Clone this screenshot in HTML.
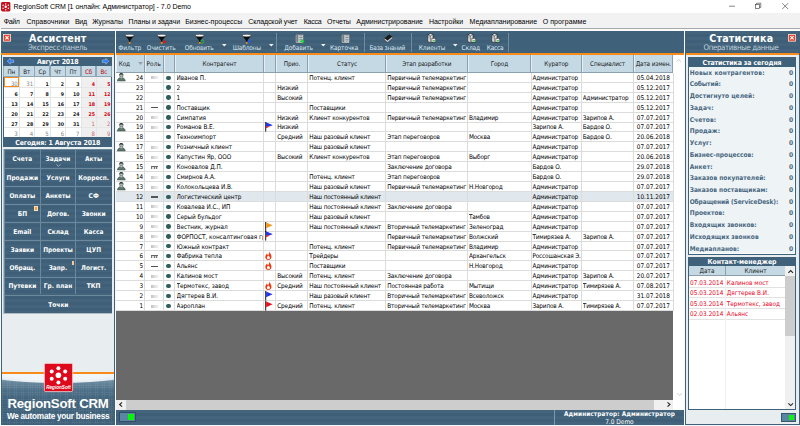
<!DOCTYPE html><html lang="ru"><head><meta charset="utf-8"><title>RegionSoft CRM</title>
<style>
html,body{margin:0;padding:0;}
body{width:800px;height:426px;overflow:hidden;position:relative;background:#f6f8f9;font-family:'DejaVu Sans Condensed','Liberation Sans',sans-serif;}
div{position:absolute;box-sizing:border-box;}
.t{height:auto;}
svg{position:absolute;overflow:visible;}
.stripe{background-image:repeating-linear-gradient(to bottom, rgba(255,255,255,0.02) 0, rgba(255,255,255,0.02) 0.6px, rgba(0,0,0,0.02) 0.6px, rgba(0,0,0,0.02) 1.2px);}
</style></head><body>
<div style="left:0.00px;top:0.00px;width:800.00px;height:13.00px;background:#ffffff;"></div>
<svg style="left:1px;top:1.6px" width="9.4" height="9.6" viewBox="0 0 10 10"><rect x="0" y="0" width="10" height="10" rx="1.5" fill="#c41220"/><circle cx="5" cy="5" r="1.3" fill="#fff"/><g fill="#fff"><circle cx="5" cy="1.9" r=".8"/><circle cx="5" cy="8.1" r=".8"/><circle cx="2.2" cy="3.4" r=".8"/><circle cx="7.8" cy="3.4" r=".8"/><circle cx="2.2" cy="6.6" r=".8"/><circle cx="7.8" cy="6.6" r=".8"/></g></svg>
<div class="t" style="top:2.45px;font-size:7px;line-height:9.10px;color:#000;white-space:nowrap;font-family:'Liberation Sans',sans-serif;letter-spacing:-0.025px;left:13.60px;"><span id="t1">RegionSoft CRM [1 онлайн: Администратор] - 7.0 Demo</span></div>
<svg style="left:700px;top:0" width="100" height="13" viewBox="0 0 100 13"><g stroke="#333" stroke-width="0.6" fill="none"><path d="M29 6.2h6"/><rect x="55.3" y="4.4" width="4.2" height="4.2"/><path d="M56.6 4.4v-1.2h4.2v4.2h-1.3"/><path d="M82.3 3.2l5.8 5.8M88.1 3.2l-5.8 5.8"/></g></svg>
<div style="left:0.00px;top:13.00px;width:800.00px;height:15.00px;background:#f2f2f2;"></div>
<div style="left:1.00px;top:28.05px;width:799.00px;height:0.95px;background:#a9a9a9;"></div>
<div style="left:0.00px;top:29.00px;width:800.00px;height:2.20px;background:#fbfbfb;"></div>
<div class="t" style="top:16.65px;font-size:7px;line-height:9.10px;color:#000;white-space:nowrap;font-family:'Liberation Sans',sans-serif;letter-spacing:-0.430px;left:3.80px;"><span id="t2">Файл</span></div>
<div class="t" style="top:16.65px;font-size:7px;line-height:9.10px;color:#000;white-space:nowrap;font-family:'Liberation Sans',sans-serif;letter-spacing:0.071px;left:26.40px;"><span id="t3">Справочники</span></div>
<div class="t" style="top:16.65px;font-size:7px;line-height:9.10px;color:#000;white-space:nowrap;font-family:'Liberation Sans',sans-serif;letter-spacing:-0.291px;left:74.90px;"><span id="t4">Вид</span></div>
<div class="t" style="top:16.65px;font-size:7px;line-height:9.10px;color:#000;white-space:nowrap;font-family:'Liberation Sans',sans-serif;letter-spacing:0.032px;left:92.20px;"><span id="t5">Журналы</span></div>
<div class="t" style="top:16.65px;font-size:7px;line-height:9.10px;color:#000;white-space:nowrap;font-family:'Liberation Sans',sans-serif;letter-spacing:-0.057px;left:128.60px;"><span id="t6">Планы и задачи</span></div>
<div class="t" style="top:16.65px;font-size:7px;line-height:9.10px;color:#000;white-space:nowrap;font-family:'Liberation Sans',sans-serif;letter-spacing:0.017px;left:185.20px;"><span id="t7">Бизнес-процессы</span></div>
<div class="t" style="top:16.65px;font-size:7px;line-height:9.10px;color:#000;white-space:nowrap;font-family:'Liberation Sans',sans-serif;letter-spacing:-0.098px;left:248.20px;"><span id="t8">Складской учет</span></div>
<div class="t" style="top:16.65px;font-size:7px;line-height:9.10px;color:#000;white-space:nowrap;font-family:'Liberation Sans',sans-serif;letter-spacing:-0.255px;left:303.80px;"><span id="t9">Касса</span></div>
<div class="t" style="top:16.65px;font-size:7px;line-height:9.10px;color:#000;white-space:nowrap;font-family:'Liberation Sans',sans-serif;letter-spacing:-0.051px;left:326.90px;"><span id="t10">Отчеты</span></div>
<div class="t" style="top:16.65px;font-size:7px;line-height:9.10px;color:#000;white-space:nowrap;font-family:'Liberation Sans',sans-serif;letter-spacing:-0.003px;left:356.30px;"><span id="t11">Администрирование</span></div>
<div class="t" style="top:16.65px;font-size:7px;line-height:9.10px;color:#000;white-space:nowrap;font-family:'Liberation Sans',sans-serif;letter-spacing:0.008px;left:428.90px;"><span id="t12">Настройки</span></div>
<div class="t" style="top:16.65px;font-size:7px;line-height:9.10px;color:#000;white-space:nowrap;font-family:'Liberation Sans',sans-serif;letter-spacing:-0.040px;left:469.60px;"><span id="t13">Медиапланирование</span></div>
<div class="t" style="top:16.65px;font-size:7px;line-height:9.10px;color:#000;white-space:nowrap;font-family:'Liberation Sans',sans-serif;letter-spacing:0.079px;left:542.70px;"><span id="t14">О программе</span></div>
<div style="left:1.10px;top:31.20px;width:113.70px;height:393.50px;background:#e8eeef;border:1.1px solid #3f6179;"></div>
<div style="left:1.20px;top:31.20px;width:113.30px;height:21.40px;background:#3f6179;"></div>
<div class="stripe" style="left:1.2px;top:31.2px;width:113.3px;height:21.4px"></div>
<div style="left:1.20px;top:52.60px;width:113.30px;height:2.50px;background:#f98b1b;"></div>
<svg style="left:3.3px;top:34.2px" width="8" height="7.6" viewBox="0 0 8 7.6"><rect x="0.4" y="0.4" width="7.2" height="6.8" fill="#e2412b" stroke="#f6e3dd" stroke-width="0.8"/><path d="M2.4 2.2l3.2 3.2M5.6 2.2L2.4 5.4" stroke="#fff" stroke-width="1.2"/></svg>
<div class="t" style="top:31.71px;font-size:10.6px;line-height:13.78px;color:#fff;white-space:nowrap;font-weight:bold;letter-spacing:0.266px;left:-92.30px;width:300px;text-align:center;text-indent:0.266px;"><span id="t15">Ассистент</span></div>
<div class="t" style="top:43.03px;font-size:7.8px;line-height:10.14px;color:#c3d2dc;white-space:nowrap;letter-spacing:-0.268px;left:-92.30px;width:300px;text-align:center;text-indent:-0.268px;"><span id="t16">Экспресс-панель</span></div>
<div style="left:3.30px;top:57.30px;width:109.00px;height:89.60px;background:#ffffff;border:0.8px solid #3f6179;"></div>
<div style="left:3.30px;top:57.30px;width:109.00px;height:8.80px;background:#3f6179;"></div>
<div class="t" style="top:58.05px;font-size:7px;line-height:9.10px;color:#fff;white-space:nowrap;font-weight:bold;letter-spacing:-0.160px;left:-92.20px;width:300px;text-align:center;text-indent:-0.160px;"><span id="t17">Август 2018</span></div>
<svg style="left:6.6px;top:58.3px;" width="7" height="6.4" viewBox="0 0 7 6.4"><path d="M0.2 3.2L3.3 0.3V2h3.4v2.4H3.3v1.7z" fill="#2f7bf0" stroke="#bcd6ff" stroke-width="0.5"/></svg>
<svg style="left:102.2px;top:58.3px;transform:scaleX(-1);" width="7" height="6.4" viewBox="0 0 7 6.4"><path d="M0.2 3.2L3.3 0.3V2h3.4v2.4H3.3v1.7z" fill="#2f7bf0" stroke="#bcd6ff" stroke-width="0.5"/></svg>
<div style="left:3.30px;top:66.00px;width:15.94px;height:10.90px;background:#c5d9e5;border:0.6px solid #8fa6b4;border-top:none;"></div>
<div class="t" style="top:67.57px;font-size:6.2px;line-height:8.06px;color:#1a1a1a;white-space:nowrap;left:-138.68px;width:300px;text-align:center;"><span id="t18">Пн</span></div>
<div style="left:18.74px;top:66.00px;width:15.94px;height:10.90px;background:#c5d9e5;border:0.6px solid #8fa6b4;border-top:none;"></div>
<div class="t" style="top:67.57px;font-size:6.2px;line-height:8.06px;color:#1a1a1a;white-space:nowrap;left:-123.24px;width:300px;text-align:center;"><span id="t19">Вт</span></div>
<div style="left:34.19px;top:66.00px;width:15.94px;height:10.90px;background:#c5d9e5;border:0.6px solid #8fa6b4;border-top:none;"></div>
<div class="t" style="top:67.57px;font-size:6.2px;line-height:8.06px;color:#1a1a1a;white-space:nowrap;left:-107.79px;width:300px;text-align:center;"><span id="t20">Ср</span></div>
<div style="left:49.63px;top:66.00px;width:15.94px;height:10.90px;background:#c5d9e5;border:0.6px solid #8fa6b4;border-top:none;"></div>
<div class="t" style="top:67.57px;font-size:6.2px;line-height:8.06px;color:#1a1a1a;white-space:nowrap;left:-92.35px;width:300px;text-align:center;"><span id="t21">Чт</span></div>
<div style="left:65.07px;top:66.00px;width:15.94px;height:10.90px;background:#c5d9e5;border:0.6px solid #8fa6b4;border-top:none;"></div>
<div class="t" style="top:67.57px;font-size:6.2px;line-height:8.06px;color:#1a1a1a;white-space:nowrap;left:-76.91px;width:300px;text-align:center;"><span id="t22">Пт</span></div>
<div style="left:80.51px;top:66.00px;width:15.94px;height:10.90px;background:#c5d9e5;border:0.6px solid #8fa6b4;border-top:none;"></div>
<div class="t" style="top:67.57px;font-size:6.2px;line-height:8.06px;color:#c00000;white-space:nowrap;left:-61.46px;width:300px;text-align:center;"><span id="t23">Сб</span></div>
<div style="left:95.96px;top:66.00px;width:15.94px;height:10.90px;background:#c5d9e5;border:0.6px solid #8fa6b4;border-top:none;"></div>
<div class="t" style="top:67.57px;font-size:6.2px;line-height:8.06px;color:#c00000;white-space:nowrap;left:-46.02px;width:300px;text-align:center;"><span id="t24">Вс</span></div>
<div style="left:80.51px;top:76.70px;width:30.89px;height:60.60px;background:#efefef;"></div>
<div class="t" style="top:79.75px;font-size:6.0px;line-height:7.80px;color:#858585;white-space:nowrap;left:-282.26px;width:300px;text-align:right;"><span id="t25">30</span></div>
<div class="t" style="top:79.75px;font-size:6.0px;line-height:7.80px;color:#858585;white-space:nowrap;left:-266.81px;width:300px;text-align:right;"><span id="t26">31</span></div>
<div class="t" style="top:80.57px;font-size:5.2px;line-height:6.76px;color:#161616;white-space:nowrap;font-weight:bold;left:-251.37px;width:300px;text-align:right;"><span id="t27">1</span></div>
<div class="t" style="top:80.57px;font-size:5.2px;line-height:6.76px;color:#161616;white-space:nowrap;font-weight:bold;left:-235.93px;width:300px;text-align:right;"><span id="t28">2</span></div>
<div class="t" style="top:80.57px;font-size:5.2px;line-height:6.76px;color:#161616;white-space:nowrap;font-weight:bold;left:-220.49px;width:300px;text-align:right;"><span id="t29">3</span></div>
<div class="t" style="top:80.57px;font-size:5.2px;line-height:6.76px;color:#d8000c;white-space:nowrap;font-weight:bold;left:-205.04px;width:300px;text-align:right;"><span id="t30">4</span></div>
<div class="t" style="top:80.57px;font-size:5.2px;line-height:6.76px;color:#d8000c;white-space:nowrap;font-weight:bold;left:-189.60px;width:300px;text-align:right;"><span id="t31">5</span></div>
<div style="left:4.10px;top:86.80px;width:107.40px;height:0.60px;background:#e6e6e6;"></div>
<div class="t" style="top:90.67px;font-size:5.2px;line-height:6.76px;color:#161616;white-space:nowrap;font-weight:bold;left:-282.26px;width:300px;text-align:right;"><span id="t32">6</span></div>
<div class="t" style="top:90.67px;font-size:5.2px;line-height:6.76px;color:#161616;white-space:nowrap;font-weight:bold;left:-266.81px;width:300px;text-align:right;"><span id="t33">7</span></div>
<div class="t" style="top:90.67px;font-size:5.2px;line-height:6.76px;color:#161616;white-space:nowrap;font-weight:bold;left:-251.37px;width:300px;text-align:right;"><span id="t34">8</span></div>
<div class="t" style="top:90.67px;font-size:5.2px;line-height:6.76px;color:#161616;white-space:nowrap;font-weight:bold;left:-235.93px;width:300px;text-align:right;"><span id="t35">9</span></div>
<div class="t" style="top:90.67px;font-size:5.2px;line-height:6.76px;color:#161616;white-space:nowrap;font-weight:bold;left:-220.49px;width:300px;text-align:right;"><span id="t36">10</span></div>
<div class="t" style="top:90.67px;font-size:5.2px;line-height:6.76px;color:#d8000c;white-space:nowrap;font-weight:bold;left:-205.04px;width:300px;text-align:right;"><span id="t37">11</span></div>
<div class="t" style="top:90.67px;font-size:5.2px;line-height:6.76px;color:#d8000c;white-space:nowrap;font-weight:bold;left:-189.60px;width:300px;text-align:right;"><span id="t38">12</span></div>
<div style="left:4.10px;top:96.90px;width:107.40px;height:0.60px;background:#e6e6e6;"></div>
<div class="t" style="top:100.77px;font-size:5.2px;line-height:6.76px;color:#161616;white-space:nowrap;font-weight:bold;left:-282.26px;width:300px;text-align:right;"><span id="t39">13</span></div>
<div class="t" style="top:100.77px;font-size:5.2px;line-height:6.76px;color:#161616;white-space:nowrap;font-weight:bold;left:-266.81px;width:300px;text-align:right;"><span id="t40">14</span></div>
<div class="t" style="top:100.77px;font-size:5.2px;line-height:6.76px;color:#161616;white-space:nowrap;font-weight:bold;left:-251.37px;width:300px;text-align:right;"><span id="t41">15</span></div>
<div class="t" style="top:100.77px;font-size:5.2px;line-height:6.76px;color:#161616;white-space:nowrap;font-weight:bold;left:-235.93px;width:300px;text-align:right;"><span id="t42">16</span></div>
<div class="t" style="top:100.77px;font-size:5.2px;line-height:6.76px;color:#161616;white-space:nowrap;font-weight:bold;left:-220.49px;width:300px;text-align:right;"><span id="t43">17</span></div>
<div class="t" style="top:100.77px;font-size:5.2px;line-height:6.76px;color:#d8000c;white-space:nowrap;font-weight:bold;left:-205.04px;width:300px;text-align:right;"><span id="t44">18</span></div>
<div class="t" style="top:100.77px;font-size:5.2px;line-height:6.76px;color:#d8000c;white-space:nowrap;font-weight:bold;left:-189.60px;width:300px;text-align:right;"><span id="t45">19</span></div>
<div style="left:4.10px;top:107.00px;width:107.40px;height:0.60px;background:#e6e6e6;"></div>
<div class="t" style="top:110.87px;font-size:5.2px;line-height:6.76px;color:#161616;white-space:nowrap;font-weight:bold;left:-282.26px;width:300px;text-align:right;"><span id="t46">20</span></div>
<div class="t" style="top:110.87px;font-size:5.2px;line-height:6.76px;color:#161616;white-space:nowrap;font-weight:bold;left:-266.81px;width:300px;text-align:right;"><span id="t47">21</span></div>
<div class="t" style="top:110.87px;font-size:5.2px;line-height:6.76px;color:#161616;white-space:nowrap;font-weight:bold;left:-251.37px;width:300px;text-align:right;"><span id="t48">22</span></div>
<div class="t" style="top:110.87px;font-size:5.2px;line-height:6.76px;color:#161616;white-space:nowrap;font-weight:bold;left:-235.93px;width:300px;text-align:right;"><span id="t49">23</span></div>
<div class="t" style="top:110.87px;font-size:5.2px;line-height:6.76px;color:#161616;white-space:nowrap;font-weight:bold;left:-220.49px;width:300px;text-align:right;"><span id="t50">24</span></div>
<div class="t" style="top:110.87px;font-size:5.2px;line-height:6.76px;color:#d8000c;white-space:nowrap;font-weight:bold;left:-205.04px;width:300px;text-align:right;"><span id="t51">25</span></div>
<div class="t" style="top:110.87px;font-size:5.2px;line-height:6.76px;color:#d8000c;white-space:nowrap;font-weight:bold;left:-189.60px;width:300px;text-align:right;"><span id="t52">26</span></div>
<div style="left:4.10px;top:117.10px;width:107.40px;height:0.60px;background:#e6e6e6;"></div>
<div class="t" style="top:120.97px;font-size:5.2px;line-height:6.76px;color:#161616;white-space:nowrap;font-weight:bold;left:-282.26px;width:300px;text-align:right;"><span id="t53">27</span></div>
<div class="t" style="top:120.97px;font-size:5.2px;line-height:6.76px;color:#161616;white-space:nowrap;font-weight:bold;left:-266.81px;width:300px;text-align:right;"><span id="t54">28</span></div>
<div class="t" style="top:120.97px;font-size:5.2px;line-height:6.76px;color:#161616;white-space:nowrap;font-weight:bold;left:-251.37px;width:300px;text-align:right;"><span id="t55">29</span></div>
<div class="t" style="top:120.97px;font-size:5.2px;line-height:6.76px;color:#161616;white-space:nowrap;font-weight:bold;left:-235.93px;width:300px;text-align:right;"><span id="t56">30</span></div>
<div class="t" style="top:120.97px;font-size:5.2px;line-height:6.76px;color:#161616;white-space:nowrap;font-weight:bold;left:-220.49px;width:300px;text-align:right;"><span id="t57">31</span></div>
<div class="t" style="top:120.15px;font-size:6.0px;line-height:7.80px;color:#d66a6e;white-space:nowrap;left:-205.04px;width:300px;text-align:right;"><span id="t58">1</span></div>
<div class="t" style="top:120.15px;font-size:6.0px;line-height:7.80px;color:#d66a6e;white-space:nowrap;left:-189.60px;width:300px;text-align:right;"><span id="t59">2</span></div>
<div style="left:4.10px;top:127.20px;width:107.40px;height:0.60px;background:#e6e6e6;"></div>
<div class="t" style="top:130.25px;font-size:6.0px;line-height:7.80px;color:#858585;white-space:nowrap;left:-282.26px;width:300px;text-align:right;"><span id="t60">3</span></div>
<div class="t" style="top:130.25px;font-size:6.0px;line-height:7.80px;color:#858585;white-space:nowrap;left:-266.81px;width:300px;text-align:right;"><span id="t61">4</span></div>
<div class="t" style="top:130.25px;font-size:6.0px;line-height:7.80px;color:#858585;white-space:nowrap;left:-251.37px;width:300px;text-align:right;"><span id="t62">5</span></div>
<div class="t" style="top:130.25px;font-size:6.0px;line-height:7.80px;color:#858585;white-space:nowrap;left:-235.93px;width:300px;text-align:right;"><span id="t63">6</span></div>
<div class="t" style="top:130.25px;font-size:6.0px;line-height:7.80px;color:#858585;white-space:nowrap;left:-220.49px;width:300px;text-align:right;"><span id="t64">7</span></div>
<div class="t" style="top:130.25px;font-size:6.0px;line-height:7.80px;color:#d66a6e;white-space:nowrap;left:-205.04px;width:300px;text-align:right;"><span id="t65">8</span></div>
<div class="t" style="top:130.25px;font-size:6.0px;line-height:7.80px;color:#d66a6e;white-space:nowrap;left:-189.60px;width:300px;text-align:right;"><span id="t66">9</span></div>
<div style="left:18.74px;top:76.70px;width:0.60px;height:60.60px;background:#e6e6e6;"></div>
<div style="left:34.19px;top:76.70px;width:0.60px;height:60.60px;background:#e6e6e6;"></div>
<div style="left:49.63px;top:76.70px;width:0.60px;height:60.60px;background:#e6e6e6;"></div>
<div style="left:65.07px;top:76.70px;width:0.60px;height:60.60px;background:#e6e6e6;"></div>
<div style="left:80.51px;top:76.70px;width:0.60px;height:60.60px;background:#e6e6e6;"></div>
<div style="left:95.96px;top:76.70px;width:0.60px;height:60.60px;background:#e6e6e6;"></div>
<div style="left:4.30px;top:77.00px;width:15.04px;height:9.80px;border:0.9px solid #f98b1b;"></div>
<div style="left:3.30px;top:137.40px;width:109.00px;height:9.40px;background:#3f6179;"></div>
<div class="t" style="top:138.81px;font-size:6.9px;line-height:8.97px;color:#fff;white-space:nowrap;font-weight:bold;letter-spacing:-0.109px;left:-92.20px;width:300px;text-align:center;text-indent:-0.109px;"><span id="t67">Сегодня: 1 Августа 2018</span></div>
<div style="left:3.40px;top:148.60px;width:109.10px;height:165.00px;background:#dfe6ea;border:0.5px solid #aebcc6;"></div>
<div class="stripe" style="left:4.3px;top:149.4px;width:107.4px;height:163.6px;background-color:#3f6179"></div>
<div class="t" style="top:155.44px;font-size:6.5px;line-height:8.45px;color:#fff;white-space:nowrap;font-weight:bold;left:-127.65px;width:300px;text-align:center;"><span id="t68">Счета</span></div>
<div class="t" style="top:155.44px;font-size:6.5px;line-height:8.45px;color:#fff;white-space:nowrap;font-weight:bold;left:-92.00px;width:300px;text-align:center;"><span id="t69">Задачи</span></div>
<div class="t" style="top:155.44px;font-size:6.5px;line-height:8.45px;color:#fff;white-space:nowrap;font-weight:bold;left:-56.35px;width:300px;text-align:center;"><span id="t70">Акты</span></div>
<div style="left:4.30px;top:167.83px;width:107.40px;height:0.80px;background:#6a899d;"></div>
<div class="t" style="top:173.57px;font-size:6.5px;line-height:8.45px;color:#fff;white-space:nowrap;font-weight:bold;left:-127.65px;width:300px;text-align:center;"><span id="t71">Продажи</span></div>
<div class="t" style="top:173.57px;font-size:6.5px;line-height:8.45px;color:#fff;white-space:nowrap;font-weight:bold;left:-92.00px;width:300px;text-align:center;"><span id="t72">Услуги</span></div>
<div class="t" style="top:173.57px;font-size:6.5px;line-height:8.45px;color:#fff;white-space:nowrap;font-weight:bold;left:-56.35px;width:300px;text-align:center;"><span id="t73">Корресп.</span></div>
<div style="left:4.30px;top:185.96px;width:107.40px;height:0.80px;background:#6a899d;"></div>
<div class="t" style="top:191.70px;font-size:6.5px;line-height:8.45px;color:#fff;white-space:nowrap;font-weight:bold;left:-127.65px;width:300px;text-align:center;"><span id="t74">Оплаты</span></div>
<div class="t" style="top:191.70px;font-size:6.5px;line-height:8.45px;color:#fff;white-space:nowrap;font-weight:bold;left:-92.00px;width:300px;text-align:center;"><span id="t75">Анкеты</span></div>
<div class="t" style="top:191.70px;font-size:6.5px;line-height:8.45px;color:#fff;white-space:nowrap;font-weight:bold;left:-56.35px;width:300px;text-align:center;"><span id="t76">СФ</span></div>
<div style="left:4.30px;top:204.09px;width:107.40px;height:0.80px;background:#6a899d;"></div>
<div class="t" style="top:209.83px;font-size:6.5px;line-height:8.45px;color:#fff;white-space:nowrap;font-weight:bold;left:-127.65px;width:300px;text-align:center;"><span id="t77">БП</span></div>
<div class="t" style="top:209.83px;font-size:6.5px;line-height:8.45px;color:#fff;white-space:nowrap;font-weight:bold;left:-92.00px;width:300px;text-align:center;"><span id="t78">Догов.</span></div>
<div class="t" style="top:209.83px;font-size:6.5px;line-height:8.45px;color:#fff;white-space:nowrap;font-weight:bold;left:-56.35px;width:300px;text-align:center;"><span id="t79">Звонки</span></div>
<div style="left:4.30px;top:222.22px;width:107.40px;height:0.80px;background:#6a899d;"></div>
<div class="t" style="top:227.96px;font-size:6.5px;line-height:8.45px;color:#fff;white-space:nowrap;font-weight:bold;left:-127.65px;width:300px;text-align:center;"><span id="t80">Email</span></div>
<div class="t" style="top:227.96px;font-size:6.5px;line-height:8.45px;color:#fff;white-space:nowrap;font-weight:bold;left:-92.00px;width:300px;text-align:center;"><span id="t81">Склад</span></div>
<div class="t" style="top:227.96px;font-size:6.5px;line-height:8.45px;color:#fff;white-space:nowrap;font-weight:bold;left:-56.35px;width:300px;text-align:center;"><span id="t82">Касса</span></div>
<div style="left:4.30px;top:240.35px;width:107.40px;height:0.80px;background:#6a899d;"></div>
<div class="t" style="top:246.09px;font-size:6.5px;line-height:8.45px;color:#fff;white-space:nowrap;font-weight:bold;left:-127.65px;width:300px;text-align:center;"><span id="t83">Заявки</span></div>
<div class="t" style="top:246.09px;font-size:6.5px;line-height:8.45px;color:#fff;white-space:nowrap;font-weight:bold;left:-92.00px;width:300px;text-align:center;"><span id="t84">Проекты</span></div>
<div class="t" style="top:246.09px;font-size:6.5px;line-height:8.45px;color:#fff;white-space:nowrap;font-weight:bold;left:-56.35px;width:300px;text-align:center;"><span id="t85">ЦУП</span></div>
<div style="left:4.30px;top:258.48px;width:107.40px;height:0.80px;background:#6a899d;"></div>
<div class="t" style="top:264.22px;font-size:6.5px;line-height:8.45px;color:#fff;white-space:nowrap;font-weight:bold;left:-127.65px;width:300px;text-align:center;"><span id="t86">Обращ.</span></div>
<div class="t" style="top:264.22px;font-size:6.5px;line-height:8.45px;color:#fff;white-space:nowrap;font-weight:bold;left:-92.00px;width:300px;text-align:center;"><span id="t87">Запр.</span></div>
<div class="t" style="top:264.22px;font-size:6.5px;line-height:8.45px;color:#fff;white-space:nowrap;font-weight:bold;left:-56.35px;width:300px;text-align:center;"><span id="t88">Логист.</span></div>
<div style="left:4.30px;top:276.61px;width:107.40px;height:0.80px;background:#6a899d;"></div>
<div class="t" style="top:282.35px;font-size:6.5px;line-height:8.45px;color:#fff;white-space:nowrap;font-weight:bold;left:-127.65px;width:300px;text-align:center;"><span id="t89">Путевки</span></div>
<div class="t" style="top:282.35px;font-size:6.5px;line-height:8.45px;color:#fff;white-space:nowrap;font-weight:bold;left:-92.00px;width:300px;text-align:center;"><span id="t90">Гр. план</span></div>
<div class="t" style="top:282.35px;font-size:6.5px;line-height:8.45px;color:#fff;white-space:nowrap;font-weight:bold;left:-56.35px;width:300px;text-align:center;"><span id="t91">ТКП</span></div>
<div style="left:4.30px;top:294.74px;width:107.40px;height:0.80px;background:#6a899d;"></div>
<div style="left:4.30px;top:149.40px;width:107.40px;height:0.70px;background:#6a899d;"></div>
<div style="left:4.30px;top:149.40px;width:0.70px;height:163.60px;background:#6a899d;"></div>
<div style="left:40.10px;top:149.40px;width:0.80px;height:144.64px;background:#6a899d;"></div>
<div style="left:75.10px;top:149.40px;width:0.80px;height:144.64px;background:#6a899d;"></div>
<div class="t" style="top:301.17px;font-size:6.5px;line-height:8.45px;color:#fff;white-space:nowrap;font-weight:bold;left:-91.60px;width:300px;text-align:center;"><span id="t92">Точки</span></div>
<svg style="left:55.6px;top:164.3px" width="4.8" height="2.8" viewBox="0 0 4.4 2.6"><path d="M0.3 0.3L2.2 2.2L4.1 0.3" fill="none" stroke="#c9d7e0" stroke-width="0.6"/></svg>
<div style="left:34.20px;top:206.20px;width:4.00px;height:4.40px;background:#f6a13a;border:0.5px solid #fbe0b8;"></div>
<div style="left:72.20px;top:260.60px;width:2.00px;height:4.60px;background:#f6c9a0;"></div>
<div style="left:1.7999999999999998px;top:373.2px;width:112.1px;height:51px;overflow:hidden;background:linear-gradient(to bottom,#93abbb 0,#6c8ba0 16%,#4d6f87 34%,#3f6179 56%)"><div style="left:-30px;top:-17px;width:172px;height:26.5px;border-radius:50%;background:radial-gradient(ellipse at 50% 30%,#f4f8fa 0,#f0f5f8 60%,#d4e0e8 88%,#b8cad6 100%)"></div><div style="left:0;top:0;width:100%;height:100%;background-image:repeating-linear-gradient(to right,rgba(255,255,255,0.05) 0,rgba(255,255,255,0.05) 0.6px,transparent 0.6px,transparent 1.76px),repeating-linear-gradient(to bottom,rgba(255,255,255,0.05) 0,rgba(255,255,255,0.05) 0.6px,transparent 0.6px,transparent 1.76px)"></div></div>
<div style="left:1.80px;top:372.40px;width:112.10px;height:2.00px;background:#f98b1b;"></div>
<svg style="left:43.9px;top:362.5px" width="29" height="29" viewBox="0 0 29 29"><rect x="0.4" y="0.4" width="28.2" height="28.2" rx="1.4" fill="#dc0a1c" stroke="#f5cfd2" stroke-width="0.8"/><g fill="#fff"><circle cx="14.4" cy="12.3" r="2.8"/><circle cx="14.4" cy="5.3" r="2"/><circle cx="14.4" cy="19.4" r="2"/><circle cx="7.7" cy="8.6" r="2"/><circle cx="21.2" cy="8.6" r="2"/><circle cx="7.7" cy="15.7" r="2"/><circle cx="21.2" cy="15.7" r="2"/></g><text x="14.5" y="26" font-size="4.7" font-weight="bold" font-style="italic" fill="#fff" text-anchor="middle" textLength="24.5" lengthAdjust="spacingAndGlyphs" font-family="Liberation Sans,sans-serif">RegionSoft</text></svg>
<div class="t" style="top:394.92px;font-size:13.2px;line-height:17.16px;color:#fff;white-space:nowrap;font-weight:bold;font-family:'Liberation Sans',sans-serif;letter-spacing:-0.202px;left:7.40px;"><span id="t93">RegionSoft CRM</span></div>
<div class="t" style="top:411.77px;font-size:8.2px;line-height:10.66px;color:#fff;white-space:nowrap;font-weight:bold;font-family:'Liberation Sans',sans-serif;letter-spacing:-0.248px;left:6.90px;"><span id="t94">We automate your business</span></div>
<div style="left:116.00px;top:31.20px;width:567.80px;height:21.50px;background:#3f6179;"></div>
<div class="stripe" style="left:116.0px;top:31.2px;width:392.6px;height:21.5px"></div>
<div style="left:116.00px;top:52.70px;width:567.80px;height:2.40px;background:#f98b1b;"></div>
<div class="t" style="top:43.88px;font-size:6.5px;line-height:8.45px;color:#dce9f3;white-space:nowrap;letter-spacing:-0.007px;left:118.20px;"><span id="t95">Фильтр</span></div>
<div class="t" style="top:43.88px;font-size:6.5px;line-height:8.45px;color:#dce9f3;white-space:nowrap;letter-spacing:-0.018px;left:146.80px;"><span id="t96">Очистить</span></div>
<div class="t" style="top:43.88px;font-size:6.5px;line-height:8.45px;color:#dce9f3;white-space:nowrap;letter-spacing:-0.115px;left:184.80px;"><span id="t97">Обновить</span></div>
<div class="t" style="top:43.88px;font-size:6.5px;line-height:8.45px;color:#dce9f3;white-space:nowrap;letter-spacing:-0.129px;left:232.70px;"><span id="t98">Шаблоны</span></div>
<div class="t" style="top:43.88px;font-size:6.5px;line-height:8.45px;color:#dce9f3;white-space:nowrap;letter-spacing:-0.080px;left:284.20px;"><span id="t99">Добавить</span></div>
<div class="t" style="top:43.88px;font-size:6.5px;line-height:8.45px;color:#dce9f3;white-space:nowrap;letter-spacing:-0.077px;left:329.90px;"><span id="t100">Карточка</span></div>
<div class="t" style="top:43.88px;font-size:6.5px;line-height:8.45px;color:#dce9f3;white-space:nowrap;letter-spacing:-0.245px;left:369.60px;"><span id="t101">База знаний</span></div>
<div class="t" style="top:43.88px;font-size:6.5px;line-height:8.45px;color:#dce9f3;white-space:nowrap;letter-spacing:-0.106px;left:418.80px;"><span id="t102">Клиенты</span></div>
<div class="t" style="top:43.88px;font-size:6.5px;line-height:8.45px;color:#dce9f3;white-space:nowrap;letter-spacing:-0.137px;left:461.60px;"><span id="t103">Склад</span></div>
<div class="t" style="top:43.88px;font-size:6.5px;line-height:8.45px;color:#dce9f3;white-space:nowrap;letter-spacing:-0.190px;left:486.70px;"><span id="t104">Касса</span></div>
<svg style="left:125.30px;top:33.9px" width="9.4" height="10" viewBox="0 0 9.4 10"><path d="M0.3 1.8L3.9 6.2v1.6h1.6V6.2L9.1 1.8z" fill="#0c0c0c"/><ellipse cx="4.7" cy="1.6" rx="4.35" ry="1.25" fill="#f6f6f6" stroke="#1a1a1a" stroke-width="0.45"/><rect x="3.85" y="7.9" width="1.7" height="1.9" fill="#f58a1a"/></svg>
<svg style="left:157.10px;top:33.9px" width="9.4" height="10" viewBox="0 0 9.4 10"><path d="M0.3 1.8L3.9 6.2v1.6h1.6V6.2L9.1 1.8z" fill="#0c0c0c"/><ellipse cx="4.7" cy="1.6" rx="4.35" ry="1.25" fill="#f6f6f6" stroke="#1a1a1a" stroke-width="0.45"/><rect x="3.85" y="7.9" width="1.7" height="1.9" fill="#f58a1a"/><path d="M6.2 6.6l2.6 2.6M8.8 6.6L6.2 9.2" stroke="#f01018" stroke-width="1.1"/></svg>
<svg style="left:195.30px;top:33.9px" width="9.4" height="10" viewBox="0 0 9.4 10"><path d="M0.3 1.8L3.9 6.2v1.6h1.6V6.2L9.1 1.8z" fill="#0c0c0c"/><ellipse cx="4.7" cy="1.6" rx="4.35" ry="1.25" fill="#f6f6f6" stroke="#1a1a1a" stroke-width="0.45"/><rect x="3.85" y="7.9" width="1.7" height="1.9" fill="#f58a1a"/><circle cx="7.4" cy="7.6" r="1.6" fill="none" stroke="#20c82c" stroke-width="1" stroke-dasharray="3.6 1.4"/></svg>
<svg style="left:241.80px;top:33.9px" width="9.4" height="10" viewBox="0 0 9.4 10"><path d="M0.3 1.8L3.9 6.2v1.6h1.6V6.2L9.1 1.8z" fill="#0c0c0c"/><ellipse cx="4.7" cy="1.6" rx="4.35" ry="1.25" fill="#f6f6f6" stroke="#1a1a1a" stroke-width="0.45"/><rect x="3.85" y="7.9" width="1.7" height="1.9" fill="#f58a1a"/><path d="M6.5 5.6h1.6v2h1L7.3 9.8L5.5 7.6h1z" fill="#1f5cf0"/></svg>
<svg style="left:294.90px;top:33.6px" width="9.4" height="9.8" viewBox="0 0 9.4 9.8"><rect x="0.4" y="0.4" width="8.2" height="8.6" fill="#e4e9ec" stroke="#39454d" stroke-width="0.55"/><rect x="1.2" y="1.2" width="2.2" height="7" fill="#53636d"/><path d="M1.2 3h2.2M1.2 5h2.2M1.2 7h2.2" stroke="#e4e9ec" stroke-width="0.45"/><path d="M4.2 1.9h3.6M4.2 3.6h3.6M4.2 5.3h3.6M4.2 7h3.6" stroke="#53636d" stroke-width="0.7"/><path d="M6.2 1.2v7" stroke="#8b979f" stroke-width="0.4"/><path d="M5.2 7.4h4M7.2 5.4v4" stroke="#18e028" stroke-width="1.3"/></svg>
<svg style="left:341.40px;top:33.6px" width="9.4" height="9.8" viewBox="0 0 9.4 9.8"><rect x="0.4" y="0.4" width="8.2" height="8.6" fill="#e4e9ec" stroke="#39454d" stroke-width="0.55"/><rect x="1.2" y="1.2" width="2.2" height="7" fill="#53636d"/><path d="M1.2 3h2.2M1.2 5h2.2M1.2 7h2.2" stroke="#e4e9ec" stroke-width="0.45"/><path d="M4.2 1.9h3.6M4.2 3.6h3.6M4.2 5.3h3.6M4.2 7h3.6" stroke="#53636d" stroke-width="0.7"/><path d="M6.2 1.2v7" stroke="#8b979f" stroke-width="0.4"/></svg>
<svg style="left:384.20px;top:34.4px" width="8.8" height="8.6" viewBox="0 0 8.8 8.6"><path d="M0.4 4.2L5.2 0.5L8.4 2.6L3.6 6.6z" fill="#1a1a1a"/><path d="M0.4 4.2v1.6L3.6 8.2L8.4 4.2V2.6L3.6 6.6z" fill="#f0f0f0" stroke="#1a1a1a" stroke-width="0.4"/></svg>
<svg style="left:427.00px;top:33.4px" width="9.2" height="10" viewBox="0 0 9.2 10"><path d="M0.8 1.9L3.6 0.4L6 1.4V8.6L3.4 9.7L0.8 8.6z" fill="#dfe3e6" stroke="#161616" stroke-width="0.55"/><path d="M0.8 1.9L3.4 2.9L6 1.4M3.4 2.9V9.7" stroke="#161616" stroke-width="0.45" fill="none"/><path d="M1.5 3.4l1.2 0.5M1.5 4.6l1.2 0.5" stroke="#555" stroke-width="0.4"/><rect x="4.9" y="5.2" width="3.9" height="4" fill="#eeeeee" stroke="#161616" stroke-width="0.45"/><rect x="5.7" y="7.3" width="2.3" height="1.1" fill="#18b428"/></svg>
<svg style="left:466.60px;top:33.4px" width="9.2" height="10" viewBox="0 0 9.2 10"><path d="M0.8 1.9L3.6 0.4L6 1.4V8.6L3.4 9.7L0.8 8.6z" fill="#dfe3e6" stroke="#161616" stroke-width="0.55"/><path d="M0.8 1.9L3.4 2.9L6 1.4M3.4 2.9V9.7" stroke="#161616" stroke-width="0.45" fill="none"/><path d="M1.5 3.4l1.2 0.5M1.5 4.6l1.2 0.5" stroke="#555" stroke-width="0.4"/><rect x="4.9" y="5.2" width="3.9" height="4" fill="#eeeeee" stroke="#161616" stroke-width="0.45"/><rect x="5.7" y="7.3" width="2.3" height="1.1" fill="#18b428"/></svg>
<svg style="left:491.10px;top:33.4px" width="9.2" height="10" viewBox="0 0 9.2 10"><path d="M0.8 1.9L3.6 0.4L6 1.4V8.6L3.4 9.7L0.8 8.6z" fill="#dfe3e6" stroke="#161616" stroke-width="0.55"/><path d="M0.8 1.9L3.4 2.9L6 1.4M3.4 2.9V9.7" stroke="#161616" stroke-width="0.45" fill="none"/><path d="M1.5 3.4l1.2 0.5M1.5 4.6l1.2 0.5" stroke="#555" stroke-width="0.4"/><rect x="4.9" y="5.2" width="3.9" height="4" fill="#eeeeee" stroke="#161616" stroke-width="0.45"/><rect x="5.7" y="7.3" width="2.3" height="1.1" fill="#18b428"/></svg>
<svg style="left:221.90px;top:44.2px" width="4.6" height="2.6" viewBox="0 0 4.6 2.6"><path d="M0 0h4.6L2.3 2.6z" fill="#eef4f8"/></svg>
<svg style="left:268.60px;top:44.2px" width="4.6" height="2.6" viewBox="0 0 4.6 2.6"><path d="M0 0h4.6L2.3 2.6z" fill="#eef4f8"/></svg>
<svg style="left:320.70px;top:44.2px" width="4.6" height="2.6" viewBox="0 0 4.6 2.6"><path d="M0 0h4.6L2.3 2.6z" fill="#eef4f8"/></svg>
<svg style="left:452.50px;top:44.2px" width="4.6" height="2.6" viewBox="0 0 4.6 2.6"><path d="M0 0h4.6L2.3 2.6z" fill="#eef4f8"/></svg>
<div style="left:275.60px;top:33.00px;width:0.70px;height:19.00px;background:#6f8da1;"></div>
<div style="left:364.30px;top:33.00px;width:0.70px;height:19.00px;background:#6f8da1;"></div>
<div style="left:410.50px;top:33.00px;width:0.70px;height:19.00px;background:#6f8da1;"></div>
<div style="left:508.30px;top:33.00px;width:0.70px;height:19.00px;background:#6f8da1;"></div>
<div style="left:116.00px;top:55.10px;width:557.00px;height:17.30px;background:#c5d9e5;"></div>
<div style="left:673.00px;top:55.10px;width:10.80px;height:345.00px;background:#ffffff;"></div>
<div style="left:143.70px;top:55.10px;width:0.80px;height:17.30px;background:#8c9fac;"></div>
<div style="left:116.00px;top:55.10px;width:0.60px;height:17.30px;background:#e4eef4;"></div>
<div class="t" style="top:59.64px;font-size:6.4px;line-height:8.32px;color:#1a1a1a;white-space:nowrap;left:118.80px;letter-spacing:-0.15px;"><span id="t105">Код</span></div>
<div style="left:163.10px;top:55.10px;width:0.80px;height:17.30px;background:#8c9fac;"></div>
<div style="left:144.50px;top:55.10px;width:0.60px;height:17.30px;background:#e4eef4;"></div>
<div class="t" style="top:59.64px;font-size:6.4px;line-height:8.32px;color:#1a1a1a;white-space:nowrap;letter-spacing:0.134px;left:146.50px;"><span id="t106">Роль</span></div>
<div style="left:174.20px;top:55.10px;width:0.80px;height:17.30px;background:#8c9fac;"></div>
<div style="left:163.90px;top:55.10px;width:0.60px;height:17.30px;background:#e4eef4;"></div>
<div style="left:263.20px;top:55.10px;width:0.80px;height:17.30px;background:#8c9fac;"></div>
<div style="left:175.00px;top:55.10px;width:0.60px;height:17.30px;background:#e4eef4;"></div>
<div class="t" style="top:59.64px;font-size:6.4px;line-height:8.32px;color:#1a1a1a;white-space:nowrap;left:69.50px;width:300px;text-align:center;letter-spacing:-0.15px;"><span id="t107">Контрагент</span></div>
<div style="left:275.10px;top:55.10px;width:0.80px;height:17.30px;background:#8c9fac;"></div>
<div style="left:264.00px;top:55.10px;width:0.60px;height:17.30px;background:#e4eef4;"></div>
<div style="left:307.20px;top:55.10px;width:0.80px;height:17.30px;background:#8c9fac;"></div>
<div style="left:275.90px;top:55.10px;width:0.60px;height:17.30px;background:#e4eef4;"></div>
<div class="t" style="top:59.64px;font-size:6.4px;line-height:8.32px;color:#1a1a1a;white-space:nowrap;left:141.95px;width:300px;text-align:center;letter-spacing:-0.15px;"><span id="t108">Прио.</span></div>
<div style="left:385.20px;top:55.10px;width:0.80px;height:17.30px;background:#8c9fac;"></div>
<div style="left:308.00px;top:55.10px;width:0.60px;height:17.30px;background:#e4eef4;"></div>
<div class="t" style="top:59.64px;font-size:6.4px;line-height:8.32px;color:#1a1a1a;white-space:nowrap;left:197.00px;width:300px;text-align:center;letter-spacing:-0.15px;"><span id="t109">Статус</span></div>
<div style="left:466.80px;top:55.10px;width:0.80px;height:17.30px;background:#8c9fac;"></div>
<div style="left:386.00px;top:55.10px;width:0.60px;height:17.30px;background:#e4eef4;"></div>
<div class="t" style="top:59.64px;font-size:6.4px;line-height:8.32px;color:#1a1a1a;white-space:nowrap;left:276.80px;width:300px;text-align:center;letter-spacing:-0.15px;"><span id="t110">Этап разработки</span></div>
<div style="left:530.30px;top:55.10px;width:0.80px;height:17.30px;background:#8c9fac;"></div>
<div style="left:467.60px;top:55.10px;width:0.60px;height:17.30px;background:#e4eef4;"></div>
<div class="t" style="top:59.64px;font-size:6.4px;line-height:8.32px;color:#1a1a1a;white-space:nowrap;left:349.35px;width:300px;text-align:center;letter-spacing:-0.15px;"><span id="t111">Город</span></div>
<div style="left:580.70px;top:55.10px;width:0.80px;height:17.30px;background:#8c9fac;"></div>
<div style="left:531.10px;top:55.10px;width:0.60px;height:17.30px;background:#e4eef4;"></div>
<div class="t" style="top:59.64px;font-size:6.4px;line-height:8.32px;color:#1a1a1a;white-space:nowrap;left:406.30px;width:300px;text-align:center;letter-spacing:-0.15px;"><span id="t112">Куратор</span></div>
<div style="left:632.70px;top:55.10px;width:0.80px;height:17.30px;background:#8c9fac;"></div>
<div style="left:581.50px;top:55.10px;width:0.60px;height:17.30px;background:#e4eef4;"></div>
<div class="t" style="top:59.64px;font-size:6.4px;line-height:8.32px;color:#1a1a1a;white-space:nowrap;left:457.50px;width:300px;text-align:center;letter-spacing:-0.15px;"><span id="t113">Специалист</span></div>
<div style="left:672.40px;top:55.10px;width:0.80px;height:17.30px;background:#8c9fac;"></div>
<div style="left:633.50px;top:55.10px;width:0.60px;height:17.30px;background:#e4eef4;"></div>
<div class="t" style="top:59.64px;font-size:6.4px;line-height:8.32px;color:#1a1a1a;white-space:nowrap;left:503.35px;width:300px;text-align:center;letter-spacing:-0.15px;"><span id="t114">Дата измен.</span></div>
<div style="left:116.00px;top:71.80px;width:557.00px;height:0.70px;background:#8c9fac;"></div>
<svg style="left:138.0px;top:62.2px" width="5" height="3" viewBox="0 0 5 3"><path d="M0 0h5L2.5 3z" fill="#93a2ad"/></svg>
<div style="left:116.00px;top:72.50px;width:557.00px;height:238.08px;background:#ffffff;"></div>
<div style="left:116.00px;top:81.82px;width:557.00px;height:0.60px;background:#dcdcdc;"></div>
<svg style="left:116.50px;top:72.10px" width="8.6" height="9.2" viewBox="0 0 8.6 9.2"><path d="M0.3 9C0.5 7.2 1.6 6.4 3 5.6L4.3 6.8L5.6 5.6C7 6.4 8.1 7.2 8.3 9z" fill="#5f7b70" stroke="#2c3d36" stroke-width="0.45"/><circle cx="4.3" cy="3.4" r="1.8" fill="#a9bab1" stroke="#2c3d36" stroke-width="0.5"/><path d="M2.2 2.9C2.4 0.4 6.2 0.4 6.4 2.9C5 2.4 3.6 2.4 2.2 2.9z" fill="#2c3d36"/></svg>
<div class="t" style="left:116.00px;top:73.86px;width:27.10px;height:8.4px;overflow:hidden;font-size:6.4px;line-height:8.4px;color:#000;white-space:nowrap;text-align:right;letter-spacing:-0.15px">24</div>
<div style="left:151.00px;top:76.46px;width:7px;height:3px;background:linear-gradient(to right,#c4c4c4,#d4d4d4 40%,#e6e6e6 60%,#ececec)"></div>
<div style="left:166.45px;top:75.56px;width:4.3px;height:4.3px;border-radius:50%;background:#2f5d5b"></div>
<div class="t" style="left:176.50px;top:73.86px;width:86.80px;height:8.4px;overflow:hidden;font-size:6.4px;line-height:8.4px;color:#000;white-space:nowrap;letter-spacing:-0.05px">Иванов П.</div>
<div class="t" style="left:309.30px;top:73.86px;width:76.00px;height:8.4px;overflow:hidden;font-size:6.4px;line-height:8.4px;color:#000;white-space:nowrap;letter-spacing:-0.15px">Потенц. клиент</div>
<div class="t" style="left:387.30px;top:73.86px;width:79.60px;height:8.4px;overflow:hidden;font-size:6.4px;line-height:8.4px;color:#000;white-space:nowrap;letter-spacing:-0.15px">Первичный телемаркетинг</div>
<div class="t" style="left:532.40px;top:73.86px;width:48.40px;height:8.4px;overflow:hidden;font-size:6.4px;line-height:8.4px;color:#000;white-space:nowrap;letter-spacing:-0.15px">Администратор</div>
<div class="t" style="left:633.50px;top:73.86px;width:39.70px;height:8.4px;overflow:hidden;font-size:6.4px;line-height:8.4px;color:#000;white-space:nowrap;text-align:center;letter-spacing:0.04px">05.04.2018</div>
<div style="left:116.00px;top:91.74px;width:557.00px;height:0.60px;background:#dcdcdc;"></div>
<div class="t" style="left:116.00px;top:83.78px;width:27.10px;height:8.4px;overflow:hidden;font-size:6.4px;line-height:8.4px;color:#000;white-space:nowrap;text-align:right;letter-spacing:-0.15px">23</div>
<div style="left:166.45px;top:85.48px;width:4.3px;height:4.3px;border-radius:50%;background:#2f5d5b"></div>
<div class="t" style="left:176.50px;top:83.78px;width:86.80px;height:8.4px;overflow:hidden;font-size:6.4px;line-height:8.4px;color:#000;white-space:nowrap;letter-spacing:-0.05px">2</div>
<div class="t" style="left:277.20px;top:83.78px;width:30.10px;height:8.4px;overflow:hidden;font-size:6.4px;line-height:8.4px;color:#000;white-space:nowrap;letter-spacing:-0.15px">Низкий</div>
<div class="t" style="left:387.30px;top:83.78px;width:79.60px;height:8.4px;overflow:hidden;font-size:6.4px;line-height:8.4px;color:#000;white-space:nowrap;letter-spacing:-0.15px">Первичный телемаркетинг</div>
<div class="t" style="left:532.40px;top:83.78px;width:48.40px;height:8.4px;overflow:hidden;font-size:6.4px;line-height:8.4px;color:#000;white-space:nowrap;letter-spacing:-0.15px">Администратор</div>
<div class="t" style="left:633.50px;top:83.78px;width:39.70px;height:8.4px;overflow:hidden;font-size:6.4px;line-height:8.4px;color:#000;white-space:nowrap;text-align:center;letter-spacing:0.04px">05.12.2017</div>
<div style="left:116.00px;top:101.66px;width:557.00px;height:0.60px;background:#dcdcdc;"></div>
<div class="t" style="left:116.00px;top:93.70px;width:27.10px;height:8.4px;overflow:hidden;font-size:6.4px;line-height:8.4px;color:#000;white-space:nowrap;text-align:right;letter-spacing:-0.15px">22</div>
<div style="left:166.45px;top:95.40px;width:4.3px;height:4.3px;border-radius:50%;background:#2f5d5b"></div>
<div class="t" style="left:176.50px;top:93.70px;width:86.80px;height:8.4px;overflow:hidden;font-size:6.4px;line-height:8.4px;color:#000;white-space:nowrap;letter-spacing:-0.05px">1</div>
<div class="t" style="left:277.20px;top:93.70px;width:30.10px;height:8.4px;overflow:hidden;font-size:6.4px;line-height:8.4px;color:#000;white-space:nowrap;letter-spacing:-0.15px">Высокий</div>
<div class="t" style="left:387.30px;top:93.70px;width:79.60px;height:8.4px;overflow:hidden;font-size:6.4px;line-height:8.4px;color:#000;white-space:nowrap;letter-spacing:-0.15px">Первичный телемаркетинг</div>
<div class="t" style="left:532.40px;top:93.70px;width:48.40px;height:8.4px;overflow:hidden;font-size:6.4px;line-height:8.4px;color:#000;white-space:nowrap;letter-spacing:-0.15px">Администратор</div>
<div class="t" style="left:582.80px;top:93.70px;width:50.00px;height:8.4px;overflow:hidden;font-size:6.4px;line-height:8.4px;color:#000;white-space:nowrap;letter-spacing:-0.15px">Администратор</div>
<div class="t" style="left:633.50px;top:93.70px;width:39.70px;height:8.4px;overflow:hidden;font-size:6.4px;line-height:8.4px;color:#000;white-space:nowrap;text-align:center;letter-spacing:0.04px">05.12.2017</div>
<div style="left:116.00px;top:111.58px;width:557.00px;height:0.60px;background:#dcdcdc;"></div>
<div class="t" style="left:116.00px;top:103.62px;width:27.10px;height:8.4px;overflow:hidden;font-size:6.4px;line-height:8.4px;color:#000;white-space:nowrap;text-align:right;letter-spacing:-0.15px">21</div>
<div style="left:151.30px;top:107.12px;width:6.4px;height:1.3px;background:#555"></div>
<div style="left:166.45px;top:105.32px;width:4.3px;height:4.3px;border-radius:50%;background:#2f5d5b"></div>
<div class="t" style="left:176.50px;top:103.62px;width:86.80px;height:8.4px;overflow:hidden;font-size:6.4px;line-height:8.4px;color:#000;white-space:nowrap;letter-spacing:-0.05px">Поставщик</div>
<div class="t" style="left:309.30px;top:103.62px;width:76.00px;height:8.4px;overflow:hidden;font-size:6.4px;line-height:8.4px;color:#000;white-space:nowrap;letter-spacing:-0.15px">Поставщики</div>
<div class="t" style="left:532.40px;top:103.62px;width:48.40px;height:8.4px;overflow:hidden;font-size:6.4px;line-height:8.4px;color:#000;white-space:nowrap;letter-spacing:-0.15px">Администратор</div>
<div class="t" style="left:633.50px;top:103.62px;width:39.70px;height:8.4px;overflow:hidden;font-size:6.4px;line-height:8.4px;color:#000;white-space:nowrap;text-align:center;letter-spacing:0.04px">05.12.2017</div>
<div style="left:116.00px;top:121.50px;width:557.00px;height:0.60px;background:#dcdcdc;"></div>
<div class="t" style="left:116.00px;top:113.54px;width:27.10px;height:8.4px;overflow:hidden;font-size:6.4px;line-height:8.4px;color:#000;white-space:nowrap;text-align:right;letter-spacing:-0.15px">20</div>
<div style="left:151.00px;top:116.14px;width:7px;height:3px;background:linear-gradient(to right,#c4c4c4,#d4d4d4 40%,#e6e6e6 60%,#ececec)"></div>
<div style="left:166.45px;top:115.24px;width:4.3px;height:4.3px;border-radius:50%;background:#2f5d5b"></div>
<div class="t" style="left:176.50px;top:113.54px;width:86.80px;height:8.4px;overflow:hidden;font-size:6.4px;line-height:8.4px;color:#000;white-space:nowrap;letter-spacing:-0.05px">Симпатия</div>
<div class="t" style="left:277.20px;top:113.54px;width:30.10px;height:8.4px;overflow:hidden;font-size:6.4px;line-height:8.4px;color:#000;white-space:nowrap;letter-spacing:-0.15px">Низкий</div>
<div class="t" style="left:309.30px;top:113.54px;width:76.00px;height:8.4px;overflow:hidden;font-size:6.4px;line-height:8.4px;color:#000;white-space:nowrap;letter-spacing:-0.15px">Клиент конкурентов</div>
<div class="t" style="left:387.30px;top:113.54px;width:79.60px;height:8.4px;overflow:hidden;font-size:6.4px;line-height:8.4px;color:#000;white-space:nowrap;letter-spacing:-0.15px">Первичный телемаркетинг</div>
<div class="t" style="left:468.90px;top:113.54px;width:61.50px;height:8.4px;overflow:hidden;font-size:6.4px;line-height:8.4px;color:#000;white-space:nowrap;letter-spacing:-0.15px">Владимир</div>
<div class="t" style="left:532.40px;top:113.54px;width:48.40px;height:8.4px;overflow:hidden;font-size:6.4px;line-height:8.4px;color:#000;white-space:nowrap;letter-spacing:-0.15px">Администратор</div>
<div class="t" style="left:582.80px;top:113.54px;width:50.00px;height:8.4px;overflow:hidden;font-size:6.4px;line-height:8.4px;color:#000;white-space:nowrap;letter-spacing:-0.15px">Зарипов А.</div>
<div class="t" style="left:633.50px;top:113.54px;width:39.70px;height:8.4px;overflow:hidden;font-size:6.4px;line-height:8.4px;color:#000;white-space:nowrap;text-align:center;letter-spacing:0.04px">07.07.2017</div>
<div style="left:116.00px;top:131.42px;width:557.00px;height:0.60px;background:#dcdcdc;"></div>
<svg style="left:116.50px;top:121.70px" width="8.6" height="9.2" viewBox="0 0 8.6 9.2"><path d="M0.3 9C0.5 7.2 1.6 6.4 3 5.6L4.3 6.8L5.6 5.6C7 6.4 8.1 7.2 8.3 9z" fill="#5f7b70" stroke="#2c3d36" stroke-width="0.45"/><circle cx="4.3" cy="3.4" r="1.8" fill="#a9bab1" stroke="#2c3d36" stroke-width="0.5"/><path d="M2.2 2.9C2.4 0.4 6.2 0.4 6.4 2.9C5 2.4 3.6 2.4 2.2 2.9z" fill="#2c3d36"/></svg>
<div class="t" style="left:116.00px;top:123.46px;width:27.10px;height:8.4px;overflow:hidden;font-size:6.4px;line-height:8.4px;color:#000;white-space:nowrap;text-align:right;letter-spacing:-0.15px">19</div>
<div style="left:151.00px;top:126.06px;width:7px;height:3px;background:linear-gradient(to right,#c4c4c4,#d4d4d4 40%,#e6e6e6 60%,#ececec)"></div>
<div style="left:166.45px;top:125.16px;width:4.3px;height:4.3px;border-radius:50%;background:#2f5d5b"></div>
<div class="t" style="left:176.50px;top:123.46px;width:86.80px;height:8.4px;overflow:hidden;font-size:6.4px;line-height:8.4px;color:#000;white-space:nowrap;letter-spacing:-0.05px">Романов В.Е.</div>
<svg style="left:265.40px;top:122.30px" width="8" height="9.6" viewBox="0 0 8 9.6"><path d="M0.7 0V9.6" stroke="#000" stroke-width="0.9"/><path d="M1.1 0.5L7.6 3.3L1.1 4.4z" fill="#2236e2"/><path d="M1.1 4.2L5.6 4.2L1.1 6.2z" fill="#e81020"/><path d="M1.1 0.5L7.6 3.3L1.1 4.6z" fill="#2236e2"/></svg>
<div class="t" style="left:277.20px;top:123.46px;width:30.10px;height:8.4px;overflow:hidden;font-size:6.4px;line-height:8.4px;color:#000;white-space:nowrap;letter-spacing:-0.15px">Низкий</div>
<div class="t" style="left:532.40px;top:123.46px;width:48.40px;height:8.4px;overflow:hidden;font-size:6.4px;line-height:8.4px;color:#000;white-space:nowrap;letter-spacing:-0.15px">Зарипов А.</div>
<div class="t" style="left:582.80px;top:123.46px;width:50.00px;height:8.4px;overflow:hidden;font-size:6.4px;line-height:8.4px;color:#000;white-space:nowrap;letter-spacing:-0.15px">Бардов О.</div>
<div class="t" style="left:633.50px;top:123.46px;width:39.70px;height:8.4px;overflow:hidden;font-size:6.4px;line-height:8.4px;color:#000;white-space:nowrap;text-align:center;letter-spacing:0.04px">07.07.2017</div>
<div style="left:116.00px;top:141.34px;width:557.00px;height:0.60px;background:#dcdcdc;"></div>
<div class="t" style="left:116.00px;top:133.38px;width:27.10px;height:8.4px;overflow:hidden;font-size:6.4px;line-height:8.4px;color:#000;white-space:nowrap;text-align:right;letter-spacing:-0.15px">18</div>
<div style="left:166.45px;top:135.08px;width:4.3px;height:4.3px;border-radius:50%;background:#2f5d5b"></div>
<div class="t" style="left:176.50px;top:133.38px;width:86.80px;height:8.4px;overflow:hidden;font-size:6.4px;line-height:8.4px;color:#000;white-space:nowrap;letter-spacing:-0.05px">Техноимпорт</div>
<div class="t" style="left:277.20px;top:133.38px;width:30.10px;height:8.4px;overflow:hidden;font-size:6.4px;line-height:8.4px;color:#000;white-space:nowrap;letter-spacing:-0.15px">Средний</div>
<div class="t" style="left:309.30px;top:133.38px;width:76.00px;height:8.4px;overflow:hidden;font-size:6.4px;line-height:8.4px;color:#000;white-space:nowrap;letter-spacing:-0.15px">Наш разовый клиент</div>
<div class="t" style="left:387.30px;top:133.38px;width:79.60px;height:8.4px;overflow:hidden;font-size:6.4px;line-height:8.4px;color:#000;white-space:nowrap;letter-spacing:-0.15px">Этап переговоров</div>
<div class="t" style="left:468.90px;top:133.38px;width:61.50px;height:8.4px;overflow:hidden;font-size:6.4px;line-height:8.4px;color:#000;white-space:nowrap;letter-spacing:-0.15px">Москва</div>
<div class="t" style="left:532.40px;top:133.38px;width:48.40px;height:8.4px;overflow:hidden;font-size:6.4px;line-height:8.4px;color:#000;white-space:nowrap;letter-spacing:-0.15px">Администратор</div>
<div class="t" style="left:582.80px;top:133.38px;width:50.00px;height:8.4px;overflow:hidden;font-size:6.4px;line-height:8.4px;color:#000;white-space:nowrap;letter-spacing:-0.15px">Бардов О.</div>
<div class="t" style="left:633.50px;top:133.38px;width:39.70px;height:8.4px;overflow:hidden;font-size:6.4px;line-height:8.4px;color:#000;white-space:nowrap;text-align:center;letter-spacing:0.04px">20.06.2018</div>
<div style="left:116.00px;top:151.26px;width:557.00px;height:0.60px;background:#dcdcdc;"></div>
<svg style="left:116.50px;top:141.54px" width="8.6" height="9.2" viewBox="0 0 8.6 9.2"><path d="M0.3 9C0.5 7.2 1.6 6.4 3 5.6L4.3 6.8L5.6 5.6C7 6.4 8.1 7.2 8.3 9z" fill="#5f7b70" stroke="#2c3d36" stroke-width="0.45"/><circle cx="4.3" cy="3.4" r="1.8" fill="#a9bab1" stroke="#2c3d36" stroke-width="0.5"/><path d="M2.2 2.9C2.4 0.4 6.2 0.4 6.4 2.9C5 2.4 3.6 2.4 2.2 2.9z" fill="#2c3d36"/></svg>
<div class="t" style="left:116.00px;top:143.30px;width:27.10px;height:8.4px;overflow:hidden;font-size:6.4px;line-height:8.4px;color:#000;white-space:nowrap;text-align:right;letter-spacing:-0.15px">17</div>
<div style="left:151.00px;top:145.90px;width:7px;height:3px;background:linear-gradient(to right,#c4c4c4,#d4d4d4 40%,#e6e6e6 60%,#ececec)"></div>
<div style="left:166.45px;top:145.00px;width:4.3px;height:4.3px;border-radius:50%;background:#2f5d5b"></div>
<div class="t" style="left:176.50px;top:143.30px;width:86.80px;height:8.4px;overflow:hidden;font-size:6.4px;line-height:8.4px;color:#000;white-space:nowrap;letter-spacing:-0.05px">Розничный клиент</div>
<div class="t" style="left:309.30px;top:143.30px;width:76.00px;height:8.4px;overflow:hidden;font-size:6.4px;line-height:8.4px;color:#000;white-space:nowrap;letter-spacing:-0.15px">Наш разовый клиент</div>
<div class="t" style="left:532.40px;top:143.30px;width:48.40px;height:8.4px;overflow:hidden;font-size:6.4px;line-height:8.4px;color:#000;white-space:nowrap;letter-spacing:-0.15px">Администратор</div>
<div class="t" style="left:633.50px;top:143.30px;width:39.70px;height:8.4px;overflow:hidden;font-size:6.4px;line-height:8.4px;color:#000;white-space:nowrap;text-align:center;letter-spacing:0.04px">07.07.2017</div>
<div style="left:116.00px;top:161.18px;width:557.00px;height:0.60px;background:#dcdcdc;"></div>
<div class="t" style="left:116.00px;top:153.22px;width:27.10px;height:8.4px;overflow:hidden;font-size:6.4px;line-height:8.4px;color:#000;white-space:nowrap;text-align:right;letter-spacing:-0.15px">16</div>
<div style="left:151.00px;top:155.82px;width:7px;height:3px;background:linear-gradient(to right,#c4c4c4,#d4d4d4 40%,#e6e6e6 60%,#ececec)"></div>
<div style="left:166.45px;top:154.92px;width:4.3px;height:4.3px;border-radius:50%;background:#2f5d5b"></div>
<div class="t" style="left:176.50px;top:153.22px;width:86.80px;height:8.4px;overflow:hidden;font-size:6.4px;line-height:8.4px;color:#000;white-space:nowrap;letter-spacing:-0.05px">Капустин Яр, ООО</div>
<div class="t" style="left:277.20px;top:153.22px;width:30.10px;height:8.4px;overflow:hidden;font-size:6.4px;line-height:8.4px;color:#000;white-space:nowrap;letter-spacing:-0.15px">Высокий</div>
<div class="t" style="left:309.30px;top:153.22px;width:76.00px;height:8.4px;overflow:hidden;font-size:6.4px;line-height:8.4px;color:#000;white-space:nowrap;letter-spacing:-0.15px">Клиент конкурентов</div>
<div class="t" style="left:387.30px;top:153.22px;width:79.60px;height:8.4px;overflow:hidden;font-size:6.4px;line-height:8.4px;color:#000;white-space:nowrap;letter-spacing:-0.15px">Этап переговоров</div>
<div class="t" style="left:468.90px;top:153.22px;width:61.50px;height:8.4px;overflow:hidden;font-size:6.4px;line-height:8.4px;color:#000;white-space:nowrap;letter-spacing:-0.15px">Выборг</div>
<div class="t" style="left:532.40px;top:153.22px;width:48.40px;height:8.4px;overflow:hidden;font-size:6.4px;line-height:8.4px;color:#000;white-space:nowrap;letter-spacing:-0.15px">Администратор</div>
<div class="t" style="left:633.50px;top:153.22px;width:39.70px;height:8.4px;overflow:hidden;font-size:6.4px;line-height:8.4px;color:#000;white-space:nowrap;text-align:center;letter-spacing:0.04px">20.06.2018</div>
<div style="left:116.00px;top:171.10px;width:557.00px;height:0.60px;background:#dcdcdc;"></div>
<svg style="left:116.50px;top:161.38px" width="8.6" height="9.2" viewBox="0 0 8.6 9.2"><path d="M0.3 9C0.5 7.2 1.6 6.4 3 5.6L4.3 6.8L5.6 5.6C7 6.4 8.1 7.2 8.3 9z" fill="#5f7b70" stroke="#2c3d36" stroke-width="0.45"/><circle cx="4.3" cy="3.4" r="1.8" fill="#a9bab1" stroke="#2c3d36" stroke-width="0.5"/><path d="M2.2 2.9C2.4 0.4 6.2 0.4 6.4 2.9C5 2.4 3.6 2.4 2.2 2.9z" fill="#2c3d36"/></svg>
<div class="t" style="left:116.00px;top:163.14px;width:27.10px;height:8.4px;overflow:hidden;font-size:6.4px;line-height:8.4px;color:#000;white-space:nowrap;text-align:right;letter-spacing:-0.15px">15</div>
<div style="left:151.30px;top:165.74px;width:6.4px;height:3.4px;border-top:1px solid #666;background:repeating-linear-gradient(to right,#777 0,#777 1px,#ddd 1px,#ddd 2.6px)"></div>
<div style="left:166.45px;top:164.84px;width:4.3px;height:4.3px;border-radius:50%;background:#2f5d5b"></div>
<div class="t" style="left:176.50px;top:163.14px;width:86.80px;height:8.4px;overflow:hidden;font-size:6.4px;line-height:8.4px;color:#000;white-space:nowrap;letter-spacing:-0.05px">Коновалов Д.П.</div>
<div class="t" style="left:387.30px;top:163.14px;width:79.60px;height:8.4px;overflow:hidden;font-size:6.4px;line-height:8.4px;color:#000;white-space:nowrap;letter-spacing:-0.15px">Заключение договора</div>
<div class="t" style="left:532.40px;top:163.14px;width:48.40px;height:8.4px;overflow:hidden;font-size:6.4px;line-height:8.4px;color:#000;white-space:nowrap;letter-spacing:-0.15px">Бардов О.</div>
<div class="t" style="left:633.50px;top:163.14px;width:39.70px;height:8.4px;overflow:hidden;font-size:6.4px;line-height:8.4px;color:#000;white-space:nowrap;text-align:center;letter-spacing:0.04px">29.07.2018</div>
<div style="left:116.00px;top:181.02px;width:557.00px;height:0.60px;background:#dcdcdc;"></div>
<svg style="left:116.50px;top:171.30px" width="8.6" height="9.2" viewBox="0 0 8.6 9.2"><path d="M0.3 9C0.5 7.2 1.6 6.4 3 5.6L4.3 6.8L5.6 5.6C7 6.4 8.1 7.2 8.3 9z" fill="#5f7b70" stroke="#2c3d36" stroke-width="0.45"/><circle cx="4.3" cy="3.4" r="1.8" fill="#a9bab1" stroke="#2c3d36" stroke-width="0.5"/><path d="M2.2 2.9C2.4 0.4 6.2 0.4 6.4 2.9C5 2.4 3.6 2.4 2.2 2.9z" fill="#2c3d36"/></svg>
<div class="t" style="left:116.00px;top:173.06px;width:27.10px;height:8.4px;overflow:hidden;font-size:6.4px;line-height:8.4px;color:#000;white-space:nowrap;text-align:right;letter-spacing:-0.15px">14</div>
<div style="left:151.00px;top:175.66px;width:7px;height:3px;background:linear-gradient(to right,#c4c4c4,#d4d4d4 40%,#e6e6e6 60%,#ececec)"></div>
<div style="left:166.45px;top:174.76px;width:4.3px;height:4.3px;border-radius:50%;background:#2f5d5b"></div>
<div class="t" style="left:176.50px;top:173.06px;width:86.80px;height:8.4px;overflow:hidden;font-size:6.4px;line-height:8.4px;color:#000;white-space:nowrap;letter-spacing:-0.05px">Смирнов А.А.</div>
<div class="t" style="left:309.30px;top:173.06px;width:76.00px;height:8.4px;overflow:hidden;font-size:6.4px;line-height:8.4px;color:#000;white-space:nowrap;letter-spacing:-0.15px">Потенц. клиент</div>
<div class="t" style="left:387.30px;top:173.06px;width:79.60px;height:8.4px;overflow:hidden;font-size:6.4px;line-height:8.4px;color:#000;white-space:nowrap;letter-spacing:-0.15px">Этап переговоров</div>
<div class="t" style="left:532.40px;top:173.06px;width:48.40px;height:8.4px;overflow:hidden;font-size:6.4px;line-height:8.4px;color:#000;white-space:nowrap;letter-spacing:-0.15px">Бардов О.</div>
<div class="t" style="left:633.50px;top:173.06px;width:39.70px;height:8.4px;overflow:hidden;font-size:6.4px;line-height:8.4px;color:#000;white-space:nowrap;text-align:center;letter-spacing:0.04px">29.07.2018</div>
<div style="left:116.00px;top:190.94px;width:557.00px;height:0.60px;background:#dcdcdc;"></div>
<svg style="left:116.50px;top:181.22px" width="8.6" height="9.2" viewBox="0 0 8.6 9.2"><path d="M0.3 9C0.5 7.2 1.6 6.4 3 5.6L4.3 6.8L5.6 5.6C7 6.4 8.1 7.2 8.3 9z" fill="#5f7b70" stroke="#2c3d36" stroke-width="0.45"/><circle cx="4.3" cy="3.4" r="1.8" fill="#a9bab1" stroke="#2c3d36" stroke-width="0.5"/><path d="M2.2 2.9C2.4 0.4 6.2 0.4 6.4 2.9C5 2.4 3.6 2.4 2.2 2.9z" fill="#2c3d36"/></svg>
<div class="t" style="left:116.00px;top:182.98px;width:27.10px;height:8.4px;overflow:hidden;font-size:6.4px;line-height:8.4px;color:#000;white-space:nowrap;text-align:right;letter-spacing:-0.15px">13</div>
<div style="left:151.00px;top:185.58px;width:7px;height:3px;background:linear-gradient(to right,#c4c4c4,#d4d4d4 40%,#e6e6e6 60%,#ececec)"></div>
<div style="left:166.45px;top:184.68px;width:4.3px;height:4.3px;border-radius:50%;background:#2f5d5b"></div>
<div class="t" style="left:176.50px;top:182.98px;width:86.80px;height:8.4px;overflow:hidden;font-size:6.4px;line-height:8.4px;color:#000;white-space:nowrap;letter-spacing:-0.05px">Колокольцева И.В.</div>
<div class="t" style="left:309.30px;top:182.98px;width:76.00px;height:8.4px;overflow:hidden;font-size:6.4px;line-height:8.4px;color:#000;white-space:nowrap;letter-spacing:-0.15px">Наш разовый клиент</div>
<div class="t" style="left:387.30px;top:182.98px;width:79.60px;height:8.4px;overflow:hidden;font-size:6.4px;line-height:8.4px;color:#000;white-space:nowrap;letter-spacing:-0.15px">Первичный телемаркетинг</div>
<div class="t" style="left:468.90px;top:182.98px;width:61.50px;height:8.4px;overflow:hidden;font-size:6.4px;line-height:8.4px;color:#000;white-space:nowrap;letter-spacing:-0.15px">Н.Новгород</div>
<div class="t" style="left:532.40px;top:182.98px;width:48.40px;height:8.4px;overflow:hidden;font-size:6.4px;line-height:8.4px;color:#000;white-space:nowrap;letter-spacing:-0.15px">Администратор</div>
<div class="t" style="left:633.50px;top:182.98px;width:39.70px;height:8.4px;overflow:hidden;font-size:6.4px;line-height:8.4px;color:#000;white-space:nowrap;text-align:center;letter-spacing:0.04px">07.07.2017</div>
<div style="left:116.00px;top:191.54px;width:557.00px;height:9.92px;background:#e0e8ed;"></div>
<div style="left:116.00px;top:200.86px;width:557.00px;height:0.60px;background:#dcdcdc;"></div>
<div class="t" style="left:116.00px;top:192.90px;width:27.10px;height:8.4px;overflow:hidden;font-size:6.4px;line-height:8.4px;color:#000;white-space:nowrap;text-align:right;letter-spacing:-0.15px">12</div>
<div style="left:151.30px;top:196.40px;width:6.4px;height:1.3px;background:#555"></div>
<div style="left:166.45px;top:194.60px;width:4.3px;height:4.3px;border-radius:50%;background:#2f5d5b"></div>
<div class="t" style="left:176.50px;top:192.90px;width:86.80px;height:8.4px;overflow:hidden;font-size:6.4px;line-height:8.4px;color:#000;white-space:nowrap;letter-spacing:-0.05px">Логистический центр</div>
<div class="t" style="left:309.30px;top:192.90px;width:76.00px;height:8.4px;overflow:hidden;font-size:6.4px;line-height:8.4px;color:#000;white-space:nowrap;letter-spacing:-0.15px">Наш постоянный клиент</div>
<div class="t" style="left:532.40px;top:192.90px;width:48.40px;height:8.4px;overflow:hidden;font-size:6.4px;line-height:8.4px;color:#000;white-space:nowrap;letter-spacing:-0.15px">Администратор</div>
<div class="t" style="left:633.50px;top:192.90px;width:39.70px;height:8.4px;overflow:hidden;font-size:6.4px;line-height:8.4px;color:#000;white-space:nowrap;text-align:center;letter-spacing:0.04px">10.11.2017</div>
<div style="left:116.00px;top:210.78px;width:557.00px;height:0.60px;background:#dcdcdc;"></div>
<div class="t" style="left:116.00px;top:202.82px;width:27.10px;height:8.4px;overflow:hidden;font-size:6.4px;line-height:8.4px;color:#000;white-space:nowrap;text-align:right;letter-spacing:-0.15px">11</div>
<div style="left:151.00px;top:205.42px;width:7px;height:3px;background:linear-gradient(to right,#c4c4c4,#d4d4d4 40%,#e6e6e6 60%,#ececec)"></div>
<div style="left:166.45px;top:204.52px;width:4.3px;height:4.3px;border-radius:50%;background:#2f5d5b"></div>
<div class="t" style="left:176.50px;top:202.82px;width:86.80px;height:8.4px;overflow:hidden;font-size:6.4px;line-height:8.4px;color:#000;white-space:nowrap;letter-spacing:-0.05px">Ковалева И.С., ИП</div>
<div class="t" style="left:309.30px;top:202.82px;width:76.00px;height:8.4px;overflow:hidden;font-size:6.4px;line-height:8.4px;color:#000;white-space:nowrap;letter-spacing:-0.15px">Наш постоянный клиент</div>
<div class="t" style="left:387.30px;top:202.82px;width:79.60px;height:8.4px;overflow:hidden;font-size:6.4px;line-height:8.4px;color:#000;white-space:nowrap;letter-spacing:-0.15px">Заключение договора</div>
<div class="t" style="left:532.40px;top:202.82px;width:48.40px;height:8.4px;overflow:hidden;font-size:6.4px;line-height:8.4px;color:#000;white-space:nowrap;letter-spacing:-0.15px">Администратор</div>
<div class="t" style="left:633.50px;top:202.82px;width:39.70px;height:8.4px;overflow:hidden;font-size:6.4px;line-height:8.4px;color:#000;white-space:nowrap;text-align:center;letter-spacing:0.04px">07.07.2017</div>
<div style="left:116.00px;top:220.70px;width:557.00px;height:0.60px;background:#dcdcdc;"></div>
<div class="t" style="left:116.00px;top:212.74px;width:27.10px;height:8.4px;overflow:hidden;font-size:6.4px;line-height:8.4px;color:#000;white-space:nowrap;text-align:right;letter-spacing:-0.15px">10</div>
<div style="left:151.00px;top:215.34px;width:7px;height:3px;background:linear-gradient(to right,#c4c4c4,#d4d4d4 40%,#e6e6e6 60%,#ececec)"></div>
<div style="left:166.45px;top:214.44px;width:4.3px;height:4.3px;border-radius:50%;background:#2f5d5b"></div>
<div class="t" style="left:176.50px;top:212.74px;width:86.80px;height:8.4px;overflow:hidden;font-size:6.4px;line-height:8.4px;color:#000;white-space:nowrap;letter-spacing:-0.05px">Серый бульдог</div>
<div class="t" style="left:309.30px;top:212.74px;width:76.00px;height:8.4px;overflow:hidden;font-size:6.4px;line-height:8.4px;color:#000;white-space:nowrap;letter-spacing:-0.15px">Наш разовый клиент</div>
<div class="t" style="left:468.90px;top:212.74px;width:61.50px;height:8.4px;overflow:hidden;font-size:6.4px;line-height:8.4px;color:#000;white-space:nowrap;letter-spacing:-0.15px">Тамбов</div>
<div class="t" style="left:532.40px;top:212.74px;width:48.40px;height:8.4px;overflow:hidden;font-size:6.4px;line-height:8.4px;color:#000;white-space:nowrap;letter-spacing:-0.15px">Администратор</div>
<div class="t" style="left:633.50px;top:212.74px;width:39.70px;height:8.4px;overflow:hidden;font-size:6.4px;line-height:8.4px;color:#000;white-space:nowrap;text-align:center;letter-spacing:0.04px">07.07.2017</div>
<div style="left:116.00px;top:230.62px;width:557.00px;height:0.60px;background:#dcdcdc;"></div>
<div class="t" style="left:116.00px;top:222.66px;width:27.10px;height:8.4px;overflow:hidden;font-size:6.4px;line-height:8.4px;color:#000;white-space:nowrap;text-align:right;letter-spacing:-0.15px">9</div>
<div style="left:151.00px;top:225.26px;width:7px;height:3px;background:linear-gradient(to right,#c4c4c4,#d4d4d4 40%,#e6e6e6 60%,#ececec)"></div>
<div style="left:166.45px;top:224.36px;width:4.3px;height:4.3px;border-radius:50%;background:#2f5d5b"></div>
<div class="t" style="left:176.50px;top:222.66px;width:86.80px;height:8.4px;overflow:hidden;font-size:6.4px;line-height:8.4px;color:#000;white-space:nowrap;letter-spacing:-0.05px">Вестник, журнал</div>
<svg style="left:265.40px;top:221.50px" width="8" height="9.6" viewBox="0 0 8 9.6"><path d="M0.7 0V9.6" stroke="#000" stroke-width="0.9"/><path d="M1.1 0.5L7.6 3.3L1.1 6.2z" fill="#f7941d"/></svg>
<div class="t" style="left:309.30px;top:222.66px;width:76.00px;height:8.4px;overflow:hidden;font-size:6.4px;line-height:8.4px;color:#000;white-space:nowrap;letter-spacing:-0.15px">Наш постоянный клиент</div>
<div class="t" style="left:387.30px;top:222.66px;width:79.60px;height:8.4px;overflow:hidden;font-size:6.4px;line-height:8.4px;color:#000;white-space:nowrap;letter-spacing:-0.15px">Вторичный телемаркетинг</div>
<div class="t" style="left:468.90px;top:222.66px;width:61.50px;height:8.4px;overflow:hidden;font-size:6.4px;line-height:8.4px;color:#000;white-space:nowrap;letter-spacing:-0.15px">Зеленоград</div>
<div class="t" style="left:532.40px;top:222.66px;width:48.40px;height:8.4px;overflow:hidden;font-size:6.4px;line-height:8.4px;color:#000;white-space:nowrap;letter-spacing:-0.15px">Администратор</div>
<div class="t" style="left:633.50px;top:222.66px;width:39.70px;height:8.4px;overflow:hidden;font-size:6.4px;line-height:8.4px;color:#000;white-space:nowrap;text-align:center;letter-spacing:0.04px">07.07.2017</div>
<div style="left:116.00px;top:240.54px;width:557.00px;height:0.60px;background:#dcdcdc;"></div>
<div class="t" style="left:116.00px;top:232.58px;width:27.10px;height:8.4px;overflow:hidden;font-size:6.4px;line-height:8.4px;color:#000;white-space:nowrap;text-align:right;letter-spacing:-0.15px">8</div>
<div style="left:151.00px;top:235.18px;width:7px;height:3px;background:linear-gradient(to right,#c4c4c4,#d4d4d4 40%,#e6e6e6 60%,#ececec)"></div>
<div style="left:166.45px;top:234.28px;width:4.3px;height:4.3px;border-radius:50%;background:#2f5d5b"></div>
<div class="t" style="left:176.50px;top:232.58px;width:86.80px;height:8.4px;overflow:hidden;font-size:6.4px;line-height:8.4px;color:#000;white-space:nowrap;letter-spacing:-0.05px">ФОРПОСТ, консалтинговая группа</div>
<svg style="left:265.40px;top:231.42px" width="8" height="9.6" viewBox="0 0 8 9.6"><path d="M0.7 0V9.6" stroke="#000" stroke-width="0.9"/><path d="M1.1 0.5L7.6 3.3L1.1 4.4z" fill="#2236e2"/><path d="M1.1 4.2L5.6 4.2L1.1 6.2z" fill="#e81020"/><path d="M1.1 0.5L7.6 3.3L1.1 4.6z" fill="#2236e2"/></svg>
<div class="t" style="left:387.30px;top:232.58px;width:79.60px;height:8.4px;overflow:hidden;font-size:6.4px;line-height:8.4px;color:#000;white-space:nowrap;letter-spacing:-0.15px">Первичный телемаркетинг</div>
<div class="t" style="left:468.90px;top:232.58px;width:61.50px;height:8.4px;overflow:hidden;font-size:6.4px;line-height:8.4px;color:#000;white-space:nowrap;letter-spacing:-0.15px">Волжский</div>
<div class="t" style="left:532.40px;top:232.58px;width:48.40px;height:8.4px;overflow:hidden;font-size:6.4px;line-height:8.4px;color:#000;white-space:nowrap;letter-spacing:-0.15px">Тимирязев А.</div>
<div class="t" style="left:582.80px;top:232.58px;width:50.00px;height:8.4px;overflow:hidden;font-size:6.4px;line-height:8.4px;color:#000;white-space:nowrap;letter-spacing:-0.15px">Зарипов А.</div>
<div class="t" style="left:633.50px;top:232.58px;width:39.70px;height:8.4px;overflow:hidden;font-size:6.4px;line-height:8.4px;color:#000;white-space:nowrap;text-align:center;letter-spacing:0.04px">07.07.2017</div>
<div style="left:116.00px;top:250.46px;width:557.00px;height:0.60px;background:#dcdcdc;"></div>
<div class="t" style="left:116.00px;top:242.50px;width:27.10px;height:8.4px;overflow:hidden;font-size:6.4px;line-height:8.4px;color:#000;white-space:nowrap;text-align:right;letter-spacing:-0.15px">7</div>
<div style="left:151.00px;top:245.10px;width:7px;height:3px;background:linear-gradient(to right,#c4c4c4,#d4d4d4 40%,#e6e6e6 60%,#ececec)"></div>
<div style="left:166.45px;top:244.20px;width:4.3px;height:4.3px;border-radius:50%;background:#2f5d5b"></div>
<div class="t" style="left:176.50px;top:242.50px;width:86.80px;height:8.4px;overflow:hidden;font-size:6.4px;line-height:8.4px;color:#000;white-space:nowrap;letter-spacing:-0.05px">Южный контракт</div>
<div class="t" style="left:309.30px;top:242.50px;width:76.00px;height:8.4px;overflow:hidden;font-size:6.4px;line-height:8.4px;color:#000;white-space:nowrap;letter-spacing:-0.15px">Потенц. клиент</div>
<div class="t" style="left:387.30px;top:242.50px;width:79.60px;height:8.4px;overflow:hidden;font-size:6.4px;line-height:8.4px;color:#000;white-space:nowrap;letter-spacing:-0.15px">Первичный телемаркетинг</div>
<div class="t" style="left:468.90px;top:242.50px;width:61.50px;height:8.4px;overflow:hidden;font-size:6.4px;line-height:8.4px;color:#000;white-space:nowrap;letter-spacing:-0.15px">Владимир</div>
<div class="t" style="left:532.40px;top:242.50px;width:48.40px;height:8.4px;overflow:hidden;font-size:6.4px;line-height:8.4px;color:#000;white-space:nowrap;letter-spacing:-0.15px">Администратор</div>
<div class="t" style="left:633.50px;top:242.50px;width:39.70px;height:8.4px;overflow:hidden;font-size:6.4px;line-height:8.4px;color:#000;white-space:nowrap;text-align:center;letter-spacing:0.04px">07.07.2017</div>
<div style="left:116.00px;top:260.38px;width:557.00px;height:0.60px;background:#dcdcdc;"></div>
<div class="t" style="left:116.00px;top:252.42px;width:27.10px;height:8.4px;overflow:hidden;font-size:6.4px;line-height:8.4px;color:#000;white-space:nowrap;text-align:right;letter-spacing:-0.15px">6</div>
<div style="left:151.30px;top:255.02px;width:6.4px;height:3.4px;border-top:1px solid #666;background:repeating-linear-gradient(to right,#777 0,#777 1px,#ddd 1px,#ddd 2.6px)"></div>
<div style="left:166.45px;top:254.12px;width:4.3px;height:4.3px;border-radius:50%;background:#2f5d5b"></div>
<div class="t" style="left:176.50px;top:252.42px;width:86.80px;height:8.4px;overflow:hidden;font-size:6.4px;line-height:8.4px;color:#000;white-space:nowrap;letter-spacing:-0.05px">Фабрика тепла</div>
<svg style="left:265.20px;top:251.26px" width="6.8" height="9.2" viewBox="0 0 6.8 9.2"><path d="M4 0.2C4.4 1.8 6.5 3 6.5 5.8C6.5 7.8 5.2 9 3.4 9C1.6 9 0.3 7.8 0.3 6C0.3 4.4 1.4 3.8 1.8 2.6C2.5 3.2 2.8 3.9 2.8 4.6C3.9 3.7 4.4 1.9 4 0.2z" fill="#f0380e"/><path d="M3.4 8.2C2.5 8.2 1.9 7.6 1.9 6.8C1.9 5.9 2.8 5.4 3.4 4.6C4 5.4 4.9 5.9 4.9 6.8C4.9 7.6 4.3 8.2 3.4 8.2z" fill="#fff"/></svg>
<div class="t" style="left:309.30px;top:252.42px;width:76.00px;height:8.4px;overflow:hidden;font-size:6.4px;line-height:8.4px;color:#000;white-space:nowrap;letter-spacing:-0.15px">Трейдеры</div>
<div class="t" style="left:468.90px;top:252.42px;width:61.50px;height:8.4px;overflow:hidden;font-size:6.4px;line-height:8.4px;color:#000;white-space:nowrap;letter-spacing:-0.15px">Архангельск</div>
<div class="t" style="left:532.40px;top:252.42px;width:48.40px;height:8.4px;overflow:hidden;font-size:6.4px;line-height:8.4px;color:#000;white-space:nowrap;letter-spacing:-0.15px">Россошанская Э.</div>
<div class="t" style="left:633.50px;top:252.42px;width:39.70px;height:8.4px;overflow:hidden;font-size:6.4px;line-height:8.4px;color:#000;white-space:nowrap;text-align:center;letter-spacing:0.04px">07.07.2017</div>
<div style="left:116.00px;top:270.30px;width:557.00px;height:0.60px;background:#dcdcdc;"></div>
<div class="t" style="left:116.00px;top:262.34px;width:27.10px;height:8.4px;overflow:hidden;font-size:6.4px;line-height:8.4px;color:#000;white-space:nowrap;text-align:right;letter-spacing:-0.15px">5</div>
<div style="left:151.30px;top:265.84px;width:6.4px;height:1.3px;background:#555"></div>
<div style="left:166.45px;top:264.04px;width:4.3px;height:4.3px;border-radius:50%;background:#2f5d5b"></div>
<div class="t" style="left:176.50px;top:262.34px;width:86.80px;height:8.4px;overflow:hidden;font-size:6.4px;line-height:8.4px;color:#000;white-space:nowrap;letter-spacing:-0.05px">Альянс</div>
<svg style="left:265.20px;top:261.18px" width="6.8" height="9.2" viewBox="0 0 6.8 9.2"><path d="M4 0.2C4.4 1.8 6.5 3 6.5 5.8C6.5 7.8 5.2 9 3.4 9C1.6 9 0.3 7.8 0.3 6C0.3 4.4 1.4 3.8 1.8 2.6C2.5 3.2 2.8 3.9 2.8 4.6C3.9 3.7 4.4 1.9 4 0.2z" fill="#f0380e"/><path d="M3.4 8.2C2.5 8.2 1.9 7.6 1.9 6.8C1.9 5.9 2.8 5.4 3.4 4.6C4 5.4 4.9 5.9 4.9 6.8C4.9 7.6 4.3 8.2 3.4 8.2z" fill="#fff"/></svg>
<div class="t" style="left:309.30px;top:262.34px;width:76.00px;height:8.4px;overflow:hidden;font-size:6.4px;line-height:8.4px;color:#000;white-space:nowrap;letter-spacing:-0.15px">Поставщики</div>
<div class="t" style="left:468.90px;top:262.34px;width:61.50px;height:8.4px;overflow:hidden;font-size:6.4px;line-height:8.4px;color:#000;white-space:nowrap;letter-spacing:-0.15px">Н.Новгород</div>
<div class="t" style="left:532.40px;top:262.34px;width:48.40px;height:8.4px;overflow:hidden;font-size:6.4px;line-height:8.4px;color:#000;white-space:nowrap;letter-spacing:-0.15px">Администратор</div>
<div class="t" style="left:633.50px;top:262.34px;width:39.70px;height:8.4px;overflow:hidden;font-size:6.4px;line-height:8.4px;color:#000;white-space:nowrap;text-align:center;letter-spacing:0.04px">07.07.2017</div>
<div style="left:116.00px;top:280.22px;width:557.00px;height:0.60px;background:#dcdcdc;"></div>
<div class="t" style="left:116.00px;top:272.26px;width:27.10px;height:8.4px;overflow:hidden;font-size:6.4px;line-height:8.4px;color:#000;white-space:nowrap;text-align:right;letter-spacing:-0.15px">4</div>
<div style="left:151.00px;top:274.86px;width:7px;height:3px;background:linear-gradient(to right,#c4c4c4,#d4d4d4 40%,#e6e6e6 60%,#ececec)"></div>
<div style="left:166.45px;top:273.96px;width:4.3px;height:4.3px;border-radius:50%;background:#2f5d5b"></div>
<div class="t" style="left:176.50px;top:272.26px;width:86.80px;height:8.4px;overflow:hidden;font-size:6.4px;line-height:8.4px;color:#000;white-space:nowrap;letter-spacing:-0.05px">Калинов мост</div>
<div class="t" style="left:277.20px;top:272.26px;width:30.10px;height:8.4px;overflow:hidden;font-size:6.4px;line-height:8.4px;color:#000;white-space:nowrap;letter-spacing:-0.15px">Высокий</div>
<div class="t" style="left:309.30px;top:272.26px;width:76.00px;height:8.4px;overflow:hidden;font-size:6.4px;line-height:8.4px;color:#000;white-space:nowrap;letter-spacing:-0.15px">Потенц. клиент</div>
<div class="t" style="left:387.30px;top:272.26px;width:79.60px;height:8.4px;overflow:hidden;font-size:6.4px;line-height:8.4px;color:#000;white-space:nowrap;letter-spacing:-0.15px">Заключение договора</div>
<div class="t" style="left:532.40px;top:272.26px;width:48.40px;height:8.4px;overflow:hidden;font-size:6.4px;line-height:8.4px;color:#000;white-space:nowrap;letter-spacing:-0.15px">Администратор</div>
<div class="t" style="left:582.80px;top:272.26px;width:50.00px;height:8.4px;overflow:hidden;font-size:6.4px;line-height:8.4px;color:#000;white-space:nowrap;letter-spacing:-0.15px">Зарипов А.</div>
<div class="t" style="left:633.50px;top:272.26px;width:39.70px;height:8.4px;overflow:hidden;font-size:6.4px;line-height:8.4px;color:#000;white-space:nowrap;text-align:center;letter-spacing:0.04px">20.07.2017</div>
<div style="left:116.00px;top:290.14px;width:557.00px;height:0.60px;background:#dcdcdc;"></div>
<div class="t" style="left:116.00px;top:282.18px;width:27.10px;height:8.4px;overflow:hidden;font-size:6.4px;line-height:8.4px;color:#000;white-space:nowrap;text-align:right;letter-spacing:-0.15px">3</div>
<div style="left:151.00px;top:284.78px;width:7px;height:3px;background:linear-gradient(to right,#c4c4c4,#d4d4d4 40%,#e6e6e6 60%,#ececec)"></div>
<div style="left:166.45px;top:283.88px;width:4.3px;height:4.3px;border-radius:50%;background:#2f5d5b"></div>
<div class="t" style="left:176.50px;top:282.18px;width:86.80px;height:8.4px;overflow:hidden;font-size:6.4px;line-height:8.4px;color:#000;white-space:nowrap;letter-spacing:-0.05px">Термотекс, завод</div>
<svg style="left:265.20px;top:281.02px" width="6.8" height="9.2" viewBox="0 0 6.8 9.2"><path d="M4 0.2C4.4 1.8 6.5 3 6.5 5.8C6.5 7.8 5.2 9 3.4 9C1.6 9 0.3 7.8 0.3 6C0.3 4.4 1.4 3.8 1.8 2.6C2.5 3.2 2.8 3.9 2.8 4.6C3.9 3.7 4.4 1.9 4 0.2z" fill="#f0380e"/><path d="M3.4 8.2C2.5 8.2 1.9 7.6 1.9 6.8C1.9 5.9 2.8 5.4 3.4 4.6C4 5.4 4.9 5.9 4.9 6.8C4.9 7.6 4.3 8.2 3.4 8.2z" fill="#fff"/></svg>
<div class="t" style="left:277.20px;top:282.18px;width:30.10px;height:8.4px;overflow:hidden;font-size:6.4px;line-height:8.4px;color:#000;white-space:nowrap;letter-spacing:-0.15px">Средний</div>
<div class="t" style="left:309.30px;top:282.18px;width:76.00px;height:8.4px;overflow:hidden;font-size:6.4px;line-height:8.4px;color:#000;white-space:nowrap;letter-spacing:-0.15px">Наш постоянный клиент</div>
<div class="t" style="left:387.30px;top:282.18px;width:79.60px;height:8.4px;overflow:hidden;font-size:6.4px;line-height:8.4px;color:#000;white-space:nowrap;letter-spacing:-0.15px">Постоянная работа</div>
<div class="t" style="left:468.90px;top:282.18px;width:61.50px;height:8.4px;overflow:hidden;font-size:6.4px;line-height:8.4px;color:#000;white-space:nowrap;letter-spacing:-0.15px">Мытищи</div>
<div class="t" style="left:532.40px;top:282.18px;width:48.40px;height:8.4px;overflow:hidden;font-size:6.4px;line-height:8.4px;color:#000;white-space:nowrap;letter-spacing:-0.15px">Администратор</div>
<div class="t" style="left:582.80px;top:282.18px;width:50.00px;height:8.4px;overflow:hidden;font-size:6.4px;line-height:8.4px;color:#000;white-space:nowrap;letter-spacing:-0.15px">Тимирязев А.</div>
<div class="t" style="left:633.50px;top:282.18px;width:39.70px;height:8.4px;overflow:hidden;font-size:6.4px;line-height:8.4px;color:#000;white-space:nowrap;text-align:center;letter-spacing:0.04px">07.08.2017</div>
<div style="left:116.00px;top:300.06px;width:557.00px;height:0.60px;background:#dcdcdc;"></div>
<div class="t" style="left:116.00px;top:292.10px;width:27.10px;height:8.4px;overflow:hidden;font-size:6.4px;line-height:8.4px;color:#000;white-space:nowrap;text-align:right;letter-spacing:-0.15px">2</div>
<div style="left:151.00px;top:294.70px;width:7px;height:3px;background:linear-gradient(to right,#c4c4c4,#d4d4d4 40%,#e6e6e6 60%,#ececec)"></div>
<div style="left:166.45px;top:293.80px;width:4.3px;height:4.3px;border-radius:50%;background:#2f5d5b"></div>
<div class="t" style="left:176.50px;top:292.10px;width:86.80px;height:8.4px;overflow:hidden;font-size:6.4px;line-height:8.4px;color:#000;white-space:nowrap;letter-spacing:-0.05px">Дягтерев В.И.</div>
<svg style="left:265.40px;top:290.94px" width="8" height="9.6" viewBox="0 0 8 9.6"><path d="M0.7 0V9.6" stroke="#000" stroke-width="0.9"/><path d="M1.1 0.5L7.6 3.3L1.1 6.2z" fill="#2236e2"/></svg>
<div class="t" style="left:309.30px;top:292.10px;width:76.00px;height:8.4px;overflow:hidden;font-size:6.4px;line-height:8.4px;color:#000;white-space:nowrap;letter-spacing:-0.15px">Наш разовый клиент</div>
<div class="t" style="left:387.30px;top:292.10px;width:79.60px;height:8.4px;overflow:hidden;font-size:6.4px;line-height:8.4px;color:#000;white-space:nowrap;letter-spacing:-0.15px">Вторичный телемаркетинг</div>
<div class="t" style="left:468.90px;top:292.10px;width:61.50px;height:8.4px;overflow:hidden;font-size:6.4px;line-height:8.4px;color:#000;white-space:nowrap;letter-spacing:-0.15px">Всеволожск</div>
<div class="t" style="left:532.40px;top:292.10px;width:48.40px;height:8.4px;overflow:hidden;font-size:6.4px;line-height:8.4px;color:#000;white-space:nowrap;letter-spacing:-0.15px">Администратор</div>
<div class="t" style="left:633.50px;top:292.10px;width:39.70px;height:8.4px;overflow:hidden;font-size:6.4px;line-height:8.4px;color:#000;white-space:nowrap;text-align:center;letter-spacing:0.04px">31.07.2018</div>
<div style="left:116.00px;top:309.98px;width:557.00px;height:0.60px;background:#dcdcdc;"></div>
<div class="t" style="left:116.00px;top:302.02px;width:27.10px;height:8.4px;overflow:hidden;font-size:6.4px;line-height:8.4px;color:#000;white-space:nowrap;text-align:right;letter-spacing:-0.15px">1</div>
<div style="left:151.00px;top:304.62px;width:7px;height:3px;background:linear-gradient(to right,#c4c4c4,#d4d4d4 40%,#e6e6e6 60%,#ececec)"></div>
<div style="left:166.45px;top:303.72px;width:4.3px;height:4.3px;border-radius:50%;background:#2f5d5b"></div>
<div class="t" style="left:176.50px;top:302.02px;width:86.80px;height:8.4px;overflow:hidden;font-size:6.4px;line-height:8.4px;color:#000;white-space:nowrap;letter-spacing:-0.05px">Аэроплан</div>
<svg style="left:265.40px;top:300.86px" width="8" height="9.6" viewBox="0 0 8 9.6"><path d="M0.7 0V9.6" stroke="#000" stroke-width="0.9"/><path d="M1.1 0.5L7.6 3.3L1.1 6.2z" fill="#e81020"/></svg>
<div class="t" style="left:277.20px;top:302.02px;width:30.10px;height:8.4px;overflow:hidden;font-size:6.4px;line-height:8.4px;color:#000;white-space:nowrap;letter-spacing:-0.15px">Средний</div>
<div class="t" style="left:309.30px;top:302.02px;width:76.00px;height:8.4px;overflow:hidden;font-size:6.4px;line-height:8.4px;color:#000;white-space:nowrap;letter-spacing:-0.15px">Потенц. клиент</div>
<div class="t" style="left:387.30px;top:302.02px;width:79.60px;height:8.4px;overflow:hidden;font-size:6.4px;line-height:8.4px;color:#000;white-space:nowrap;letter-spacing:-0.15px">Вторичный телемаркетинг</div>
<div class="t" style="left:468.90px;top:302.02px;width:61.50px;height:8.4px;overflow:hidden;font-size:6.4px;line-height:8.4px;color:#000;white-space:nowrap;letter-spacing:-0.15px">Москва</div>
<div class="t" style="left:532.40px;top:302.02px;width:48.40px;height:8.4px;overflow:hidden;font-size:6.4px;line-height:8.4px;color:#000;white-space:nowrap;letter-spacing:-0.15px">Зарипов А.</div>
<div class="t" style="left:582.80px;top:302.02px;width:50.00px;height:8.4px;overflow:hidden;font-size:6.4px;line-height:8.4px;color:#000;white-space:nowrap;letter-spacing:-0.15px">Тимирязев А.</div>
<div class="t" style="left:633.50px;top:302.02px;width:39.70px;height:8.4px;overflow:hidden;font-size:6.4px;line-height:8.4px;color:#000;white-space:nowrap;text-align:center;letter-spacing:0.04px">07.07.2017</div>
<div style="left:143.90px;top:72.50px;width:0.60px;height:238.08px;background:#dcdcdc;"></div>
<div style="left:163.30px;top:72.50px;width:0.60px;height:238.08px;background:#dcdcdc;"></div>
<div style="left:174.40px;top:72.50px;width:0.60px;height:238.08px;background:#dcdcdc;"></div>
<div style="left:263.40px;top:72.50px;width:0.60px;height:238.08px;background:#dcdcdc;"></div>
<div style="left:275.30px;top:72.50px;width:0.60px;height:238.08px;background:#dcdcdc;"></div>
<div style="left:307.40px;top:72.50px;width:0.60px;height:238.08px;background:#dcdcdc;"></div>
<div style="left:385.40px;top:72.50px;width:0.60px;height:238.08px;background:#dcdcdc;"></div>
<div style="left:467.00px;top:72.50px;width:0.60px;height:238.08px;background:#dcdcdc;"></div>
<div style="left:530.50px;top:72.50px;width:0.60px;height:238.08px;background:#dcdcdc;"></div>
<div style="left:580.90px;top:72.50px;width:0.60px;height:238.08px;background:#dcdcdc;"></div>
<div style="left:632.90px;top:72.50px;width:0.60px;height:238.08px;background:#dcdcdc;"></div>
<div style="left:672.60px;top:72.50px;width:0.60px;height:238.08px;background:#dcdcdc;"></div>
<div style="left:116.00px;top:310.60px;width:557.00px;height:89.30px;background:#696969;"></div>
<div style="left:116.00px;top:399.80px;width:567.80px;height:10.20px;background:#f0f0f0;"></div>
<div style="left:126.00px;top:399.80px;width:528.00px;height:10.20px;background:#cdcdcd;"></div>
<div style="left:673.20px;top:399.80px;width:10.60px;height:10.20px;background:#ffffff;"></div>
<svg style="left:118.8px;top:402.4px" width="3.6" height="5" viewBox="0 0 3.6 5"><path d="M3.1 0.4L0.6 2.5L3.1 4.6" fill="none" stroke="#222" stroke-width="1.05"/></svg>
<svg style="left:667.4px;top:402.4px" width="3.6" height="5" viewBox="0 0 3.6 5"><path d="M0.5 0.4L3 2.5L0.5 4.6" fill="none" stroke="#222" stroke-width="1.05"/></svg>
<svg style="left:676.2px;top:59.4px" width="5.4" height="3" viewBox="0 0 5.4 3"><path d="M0.4 2.7L2.7 0.5L5 2.7" fill="none" stroke="#b4b4b4" stroke-width="0.7"/></svg>
<svg style="left:676.8px;top:393.4px" width="5.4" height="3" viewBox="0 0 5.4 3"><path d="M0.4 0.3L2.7 2.5L5 0.3" fill="none" stroke="#b4b4b4" stroke-width="0.7"/></svg>
<div style="left:116.00px;top:410.00px;width:567.80px;height:14.60px;background:#3f6179;"></div>
<div class="stripe" style="left:116.0px;top:410px;width:567.8px;height:14.6px"></div>
<div style="left:554.20px;top:410.00px;width:0.80px;height:14.60px;background:#7d98aa;"></div>
<div class="t" style="top:409.84px;font-size:6.4px;line-height:8.32px;color:#fff;white-space:nowrap;font-weight:bold;letter-spacing:0.099px;left:469.40px;width:300px;text-align:center;text-indent:0.099px;"><span id="t115">Администратор: Администратор</span></div>
<div class="t" style="top:417.77px;font-size:6.5px;line-height:8.45px;color:#fff;white-space:nowrap;left:469.40px;width:300px;text-align:center;"><span id="t116">7.0 Demo</span></div>
<div style="left:119.20px;top:411.80px;width:16.80px;height:9.90px;background:#5b86a3;border:0.7px solid #2f4e63;"></div>
<div style="left:127.90px;top:413.90px;width:6.00px;height:6.00px;background:#08f608;"></div>
<div style="left:685.30px;top:31.20px;width:114.40px;height:393.50px;background:#e8eeef;border:1.1px solid #3f6179;"></div>
<div style="left:685.80px;top:31.20px;width:113.40px;height:21.40px;background:#3f6179;"></div>
<div class="stripe" style="left:685.8px;top:31.2px;width:113.40000000000009px;height:21.4px"></div>
<div style="left:685.80px;top:52.60px;width:113.40px;height:2.50px;background:#f98b1b;"></div>
<svg style="left:788.3px;top:34.2px" width="8" height="7.6" viewBox="0 0 8 7.6"><rect x="0.4" y="0.4" width="7.2" height="6.8" fill="#e2412b" stroke="#f6e3dd" stroke-width="0.8"/><path d="M2.4 2.2l3.2 3.2M5.6 2.2L2.4 5.4" stroke="#fff" stroke-width="1.2"/></svg>
<div class="t" style="top:31.71px;font-size:10.6px;line-height:13.78px;color:#fff;white-space:nowrap;font-weight:bold;letter-spacing:0.209px;left:591.20px;width:300px;text-align:center;text-indent:0.209px;"><span id="t117">Статистика</span></div>
<div class="t" style="top:43.03px;font-size:7.8px;line-height:10.14px;color:#c3d2dc;white-space:nowrap;letter-spacing:-0.323px;left:591.20px;width:300px;text-align:center;text-indent:-0.323px;"><span id="t118">Оперативные данные</span></div>
<div style="left:687.70px;top:57.30px;width:108.70px;height:197.60px;background:#eef3f6;border:1.1px solid #3f6179;"></div>
<div style="left:688.80px;top:58.40px;width:106.50px;height:195.40px;border:0.5px solid #fafcfd;"></div>
<div style="left:687.90px;top:57.30px;width:108.30px;height:9.30px;background:#3f6179;"></div>
<div class="t" style="top:59.02px;font-size:6.9px;line-height:8.97px;color:#fff;white-space:nowrap;font-weight:bold;letter-spacing:-0.096px;left:592.00px;width:300px;text-align:center;text-indent:-0.096px;"><span id="t119">Статистика за сегодня</span></div>
<div class="t" style="top:68.54px;font-size:6.55px;line-height:8.52px;color:#48677f;white-space:nowrap;font-weight:bold;letter-spacing:0.142px;left:689.70px;"><span id="t120">Новых контрагентов:</span></div>
<div class="t" style="top:68.54px;font-size:6.55px;line-height:8.52px;color:#48677f;white-space:nowrap;font-weight:bold;left:493.20px;width:300px;text-align:right;"><span id="t121">0</span></div>
<div class="t" style="top:80.29px;font-size:6.55px;line-height:8.52px;color:#48677f;white-space:nowrap;font-weight:bold;letter-spacing:-0.105px;left:689.70px;"><span id="t122">Событий:</span></div>
<div class="t" style="top:80.29px;font-size:6.55px;line-height:8.52px;color:#48677f;white-space:nowrap;font-weight:bold;left:493.20px;width:300px;text-align:right;"><span id="t123">0</span></div>
<div class="t" style="top:92.03px;font-size:6.55px;line-height:8.52px;color:#48677f;white-space:nowrap;font-weight:bold;letter-spacing:0.060px;left:689.70px;"><span id="t124">Достигнуто целей:</span></div>
<div class="t" style="top:92.03px;font-size:6.55px;line-height:8.52px;color:#48677f;white-space:nowrap;font-weight:bold;left:493.20px;width:300px;text-align:right;"><span id="t125">0</span></div>
<div class="t" style="top:103.78px;font-size:6.55px;line-height:8.52px;color:#48677f;white-space:nowrap;font-weight:bold;letter-spacing:0.117px;left:689.70px;"><span id="t126">Задач:</span></div>
<div class="t" style="top:103.78px;font-size:6.55px;line-height:8.52px;color:#48677f;white-space:nowrap;font-weight:bold;left:493.20px;width:300px;text-align:right;"><span id="t127">0</span></div>
<div class="t" style="top:115.52px;font-size:6.55px;line-height:8.52px;color:#48677f;white-space:nowrap;font-weight:bold;letter-spacing:0.085px;left:689.70px;"><span id="t128">Счетов:</span></div>
<div class="t" style="top:115.52px;font-size:6.55px;line-height:8.52px;color:#48677f;white-space:nowrap;font-weight:bold;left:493.20px;width:300px;text-align:right;"><span id="t129">0</span></div>
<div class="t" style="top:127.27px;font-size:6.55px;line-height:8.52px;color:#48677f;white-space:nowrap;font-weight:bold;letter-spacing:0.049px;left:689.70px;"><span id="t130">Продаж:</span></div>
<div class="t" style="top:127.27px;font-size:6.55px;line-height:8.52px;color:#48677f;white-space:nowrap;font-weight:bold;left:493.20px;width:300px;text-align:right;"><span id="t131">0</span></div>
<div class="t" style="top:139.01px;font-size:6.55px;line-height:8.52px;color:#48677f;white-space:nowrap;font-weight:bold;letter-spacing:0.062px;left:689.70px;"><span id="t132">Услуг:</span></div>
<div class="t" style="top:139.01px;font-size:6.55px;line-height:8.52px;color:#48677f;white-space:nowrap;font-weight:bold;left:493.20px;width:300px;text-align:right;"><span id="t133">0</span></div>
<div class="t" style="top:150.76px;font-size:6.55px;line-height:8.52px;color:#48677f;white-space:nowrap;font-weight:bold;letter-spacing:0.008px;left:689.70px;"><span id="t134">Бизнес-процессов:</span></div>
<div class="t" style="top:150.76px;font-size:6.55px;line-height:8.52px;color:#48677f;white-space:nowrap;font-weight:bold;left:493.20px;width:300px;text-align:right;"><span id="t135">0</span></div>
<div class="t" style="top:162.50px;font-size:6.55px;line-height:8.52px;color:#48677f;white-space:nowrap;font-weight:bold;letter-spacing:0.099px;left:689.70px;"><span id="t136">Анкет:</span></div>
<div class="t" style="top:162.50px;font-size:6.55px;line-height:8.52px;color:#48677f;white-space:nowrap;font-weight:bold;left:493.20px;width:300px;text-align:right;"><span id="t137">0</span></div>
<div class="t" style="top:174.25px;font-size:6.55px;line-height:8.52px;color:#48677f;white-space:nowrap;font-weight:bold;letter-spacing:0.020px;left:689.70px;"><span id="t138">Заказов покупателей:</span></div>
<div class="t" style="top:174.25px;font-size:6.55px;line-height:8.52px;color:#48677f;white-space:nowrap;font-weight:bold;left:493.20px;width:300px;text-align:right;"><span id="t139">0</span></div>
<div class="t" style="top:185.99px;font-size:6.55px;line-height:8.52px;color:#48677f;white-space:nowrap;font-weight:bold;letter-spacing:0.005px;left:689.70px;"><span id="t140">Заказов поставщикам:</span></div>
<div class="t" style="top:185.99px;font-size:6.55px;line-height:8.52px;color:#48677f;white-space:nowrap;font-weight:bold;left:493.20px;width:300px;text-align:right;"><span id="t141">0</span></div>
<div class="t" style="top:197.74px;font-size:6.55px;line-height:8.52px;color:#48677f;white-space:nowrap;font-weight:bold;letter-spacing:-0.093px;left:689.70px;"><span id="t142">Обращений (ServiceDesk):</span></div>
<div class="t" style="top:197.74px;font-size:6.55px;line-height:8.52px;color:#48677f;white-space:nowrap;font-weight:bold;left:493.20px;width:300px;text-align:right;"><span id="t143">0</span></div>
<div class="t" style="top:209.48px;font-size:6.55px;line-height:8.52px;color:#48677f;white-space:nowrap;font-weight:bold;letter-spacing:0.030px;left:689.70px;"><span id="t144">Проектов:</span></div>
<div class="t" style="top:209.48px;font-size:6.55px;line-height:8.52px;color:#48677f;white-space:nowrap;font-weight:bold;left:493.20px;width:300px;text-align:right;"><span id="t145">0</span></div>
<div class="t" style="top:221.23px;font-size:6.55px;line-height:8.52px;color:#48677f;white-space:nowrap;font-weight:bold;letter-spacing:0.014px;left:689.70px;"><span id="t146">Входящих звонков:</span></div>
<div class="t" style="top:221.23px;font-size:6.55px;line-height:8.52px;color:#48677f;white-space:nowrap;font-weight:bold;left:493.20px;width:300px;text-align:right;"><span id="t147">0</span></div>
<div class="t" style="top:232.97px;font-size:6.55px;line-height:8.52px;color:#48677f;white-space:nowrap;font-weight:bold;letter-spacing:0.039px;left:689.70px;"><span id="t148">Исходящих звонков</span></div>
<div class="t" style="top:232.97px;font-size:6.55px;line-height:8.52px;color:#48677f;white-space:nowrap;font-weight:bold;left:493.20px;width:300px;text-align:right;"><span id="t149">0</span></div>
<div class="t" style="top:244.72px;font-size:6.55px;line-height:8.52px;color:#48677f;white-space:nowrap;font-weight:bold;letter-spacing:0.018px;left:689.70px;"><span id="t150">Медиапланов:</span></div>
<div class="t" style="top:244.72px;font-size:6.55px;line-height:8.52px;color:#48677f;white-space:nowrap;font-weight:bold;left:493.20px;width:300px;text-align:right;"><span id="t151">0</span></div>
<div style="left:687.70px;top:257.40px;width:108.70px;height:152.40px;background:#ffffff;border:1.0px solid #3f6179;"></div>
<div style="left:687.90px;top:257.40px;width:108.30px;height:8.60px;background:#3f6179;"></div>
<div class="t" style="top:258.41px;font-size:6.9px;line-height:8.97px;color:#fff;white-space:nowrap;font-weight:bold;letter-spacing:-0.021px;left:592.00px;width:300px;text-align:center;text-indent:-0.021px;"><span id="t152">Контакт-менеджер</span></div>
<div style="left:688.70px;top:266.00px;width:96.70px;height:10.30px;background:#c5d9e5;border-bottom:0.7px solid #8c9fac;"></div>
<div style="left:725.00px;top:266.00px;width:0.80px;height:10.30px;background:#8c9fac;"></div>
<div style="left:784.60px;top:266.00px;width:0.80px;height:10.30px;background:#8c9fac;"></div>
<div class="t" style="top:267.34px;font-size:6.4px;line-height:8.32px;color:#1a1a1a;white-space:nowrap;left:557.00px;width:300px;text-align:center;"><span id="t153">Дата</span></div>
<div class="t" style="top:267.34px;font-size:6.4px;line-height:8.32px;color:#1a1a1a;white-space:nowrap;left:605.50px;width:300px;text-align:center;"><span id="t154">Клиент</span></div>
<div style="left:785.40px;top:266.00px;width:10.00px;height:142.80px;background:#f0f0f0;"></div>
<div style="left:785.40px;top:276.30px;width:10.00px;height:60.00px;background:#cdcdcd;"></div>
<svg style="left:787.6px;top:269.8px" width="5.4" height="3.2" viewBox="0 0 5.4 3.2"><path d="M0.4 2.9L2.7 0.6L5 2.9" fill="none" stroke="#222" stroke-width="1.05"/></svg>
<svg style="left:787.6px;top:403.0px" width="5.4" height="3.2" viewBox="0 0 5.4 3.2"><path d="M0.4 0.3L2.7 2.6L5 0.3" fill="none" stroke="#222" stroke-width="1.05"/></svg>
<div class="t" style="top:278.54px;font-size:6.4px;line-height:8.32px;color:#e8001c;white-space:nowrap;letter-spacing:0.058px;left:690.00px;"><span id="t155">07.03.2014</span></div>
<div class="t" style="top:278.54px;font-size:6.4px;line-height:8.32px;color:#e8001c;white-space:nowrap;left:726.80px;"><span id="t156">Калинов мост</span></div>
<div style="left:688.70px;top:286.90px;width:96.70px;height:0.60px;background:#e2e2e2;"></div>
<div class="t" style="top:289.09px;font-size:6.4px;line-height:8.32px;color:#e8001c;white-space:nowrap;letter-spacing:0.058px;left:690.00px;"><span id="t157">05.03.2014</span></div>
<div class="t" style="top:289.09px;font-size:6.4px;line-height:8.32px;color:#e8001c;white-space:nowrap;left:726.80px;"><span id="t158">Дягтерев В.И.</span></div>
<div style="left:688.70px;top:297.45px;width:96.70px;height:0.60px;background:#e2e2e2;"></div>
<div class="t" style="top:299.64px;font-size:6.4px;line-height:8.32px;color:#e8001c;white-space:nowrap;letter-spacing:0.058px;left:690.00px;"><span id="t159">05.03.2014</span></div>
<div class="t" style="top:299.64px;font-size:6.4px;line-height:8.32px;color:#e8001c;white-space:nowrap;left:726.80px;"><span id="t160">Термотекс, завод</span></div>
<div style="left:688.70px;top:308.00px;width:96.70px;height:0.60px;background:#e2e2e2;"></div>
<div class="t" style="top:310.19px;font-size:6.4px;line-height:8.32px;color:#e8001c;white-space:nowrap;letter-spacing:0.058px;left:690.00px;"><span id="t161">02.03.2014</span></div>
<div class="t" style="top:310.19px;font-size:6.4px;line-height:8.32px;color:#e8001c;white-space:nowrap;left:726.80px;"><span id="t162">Альянс</span></div>
<div style="left:688.70px;top:318.55px;width:96.70px;height:0.60px;background:#e2e2e2;"></div>
<div style="left:725.00px;top:276.30px;width:0.70px;height:132.40px;background:#efefef;"></div>
<div style="left:687.70px;top:409.20px;width:108.70px;height:0.01px;"></div>
<div style="left:781.00px;top:413.20px;width:14.60px;height:8.80px;background:#5a85a2;border:0.7px solid #35566c;"></div>
<div style="left:788.60px;top:414.80px;width:5.60px;height:5.60px;background:#12f012;"></div>
</body></html>
